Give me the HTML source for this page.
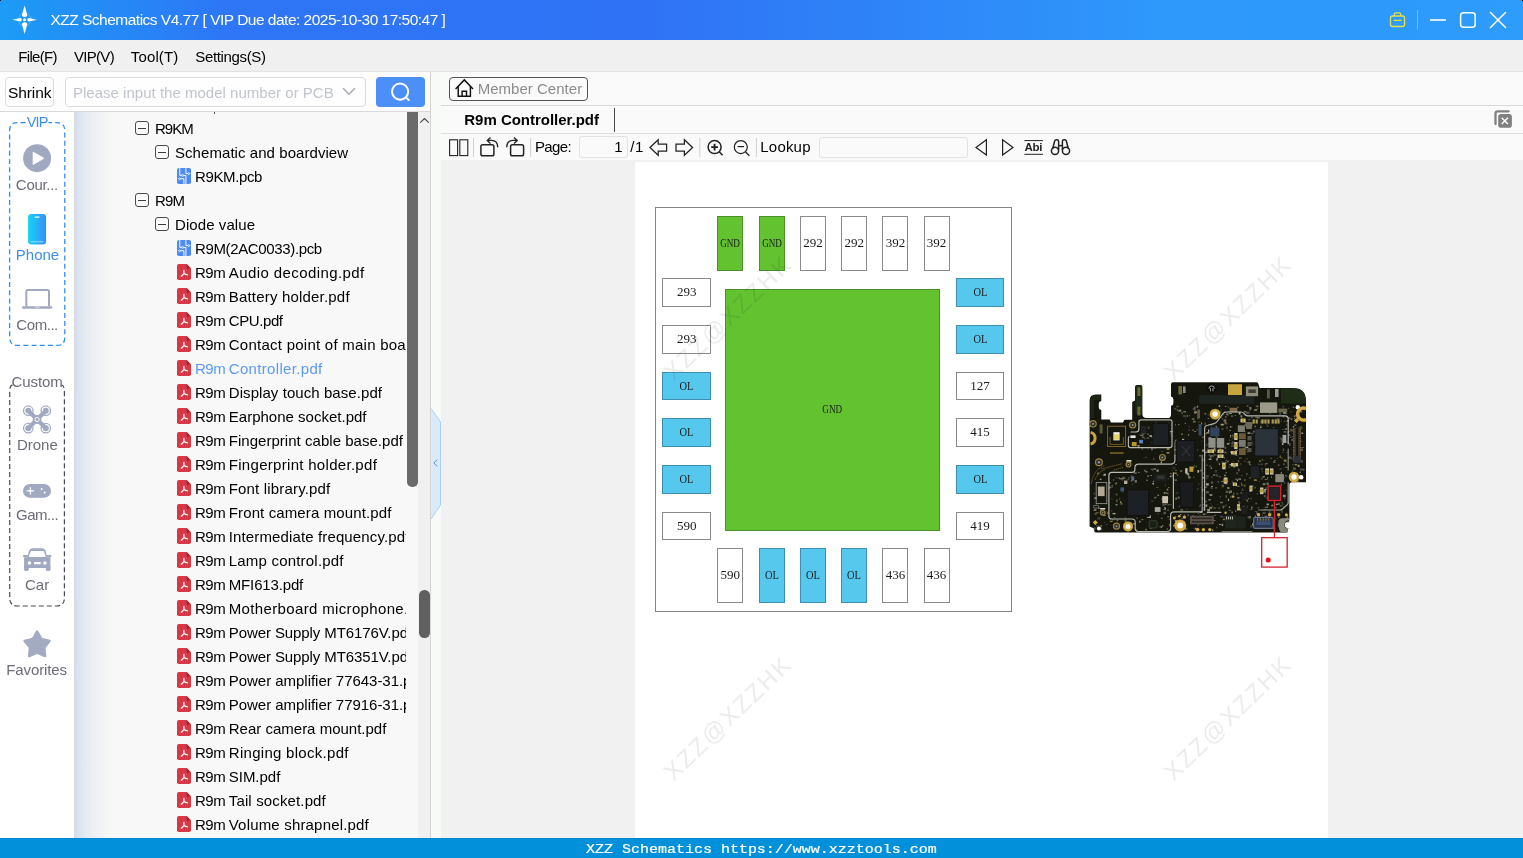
<!DOCTYPE html>
<html>
<head>
<meta charset="utf-8">
<title>XZZ Schematics</title>
<style>
*{box-sizing:border-box;margin:0;padding:0}
html,body{width:1523px;height:858px;overflow:hidden;background:#f0f0f0}
body{font-family:"Liberation Sans",sans-serif;font-size:15px;color:#000;position:relative}
.abs{position:absolute}
.t{position:absolute;white-space:pre;line-height:1}
/* title bar */
#title{left:0;top:0;width:1523px;height:40px;background:linear-gradient(90deg,#1c9cf6 0,#2e76f6 15%,#2f72f5 42%,#2e98fb 76%,#2d9cfb 100%)}
#menubar{left:0;top:40px;width:1523px;height:32px;background:#f0f0f0;border-bottom:1px solid #e2e2e2}
/* left */
#leftbg{left:0;top:72px;width:430px;height:766px;background:#fdfdfd}
#sidebar{left:0;top:112px;width:75px;height:726px;background:#fff;border-right:1px solid #d9d9d9}
#tree{left:75px;top:112px;width:331.3px;height:726px;background:linear-gradient(90deg,#d3dff2 0,#e2e8f1 8px,#ebeef3 16px,#f1f2f5 25px,#f8f8f8 36px);overflow:hidden}
#sbtrack{left:406px;top:112px;width:24px;height:726px;background:linear-gradient(90deg,#f8f8f8 12px,#f0f0f0 12px)}
#status{left:0;top:838px;width:1523px;height:20px;background:#0190d9;border-top:1px solid #0486cd}
/* right */
#rightbg{left:441px;top:72px;width:1082px;height:88px;background:#fafafa}
#content{left:441px;top:160px;width:1082px;height:678px;background:#f1f1f1}
#page{left:635px;top:162px;width:693px;height:676px;background:#fff}
.hl{position:absolute;height:1px;background:#dcdcdc}
.vl{position:absolute;width:1px;background:#dcdcdc}
.row{position:absolute;left:0;height:24px;width:332px}
.row .t{top:4.7px}
.exp{position:absolute;width:14px;height:14px;border:1px solid #4a4a4a;border-radius:3px;background:#fbfbfb}
.exp:after{content:"";position:absolute;left:2px;top:5.5px;width:8px;height:1px;background:#3a3a3a}
.pad{position:absolute;border:1px solid #8a8a8a;background:#fff}
.pad.g{background:#62c230;border-color:#4a8f2a}
.pad.b{background:#56c8ee;border-color:#3d8fb0}
.pad span{position:absolute;left:-20px;right:-20px;text-align:center;font-family:"Liberation Serif",serif;font-size:13px;line-height:1;color:#1a1a1a;white-space:pre}
.wm{position:absolute;mix-blend-mode:multiply;font-size:24px;color:#ececec;letter-spacing:2.1px;white-space:pre;line-height:1;transform:translate(-50%,-50%) rotate(-44deg)}
.sidelabel{position:absolute;left:0;width:75px;text-align:center;font-size:15px;color:#6c6c78;line-height:1;white-space:pre}
</style>
</head>
<body>
<div id="title" class="abs">
<svg class="abs" style="left:10px;top:3px" width="30" height="34" viewBox="10 3 30 34">
<circle cx="24.6" cy="19.7" r="6.4" fill="none" stroke="#fff" stroke-opacity=".28" stroke-width="0.9" stroke-dasharray="5.2 4.8" stroke-dashoffset="-2.4"/>
<path d="M24.6 5.4 L27.2 14.8 Q27.3 17 24.6 17.1 Q21.9 17 22 14.8 Z" fill="#fff"/>
<path d="M24.6 34 L27.2 24.6 Q27.3 22.4 24.6 22.3 Q21.9 22.4 22 24.6 Z" fill="#fff"/>
<path d="M12.4 19.7 L20.2 18 Q21.9 18.1 21.9 19.7 Q21.9 21.3 20.2 21.4 Z" fill="#fff"/>
<path d="M36.8 19.7 L29 18 Q27.3 18.1 27.3 19.7 Q27.3 21.3 29 21.4 Z" fill="#fff"/>
<circle cx="24.6" cy="19.7" r="1.55" fill="#fff"/>
</svg>
<span class="t" id="ttext" style="left:50.5px;top:12px;font-size:15.5px;color:#fff;letter-spacing:-0.51px">XZZ Schematics V4.77 [ VIP Due date: 2025-10-30 17:50:47 ]</span>
<svg class="abs" style="left:1385px;top:8px" width="130" height="24" viewBox="1385 8 130 24" fill="none">
<rect x="1390.5" y="16" width="14" height="10.5" rx="2" stroke="#e6e04a" stroke-width="1.3"/>
<path d="M1394.3 16 v-1.6 q0-1.5 1.5-1.5 h3.4 q1.5 0 1.5 1.5 v1.6" stroke="#e6e04a" stroke-width="1.3"/>
<path d="M1393.6 20.4 h7.8" stroke="#e6e04a" stroke-width="1.3"/>
<path d="M1417.5 10 v19.5" stroke="#7fb4f5" stroke-width="1"/>
<path d="M1430 20 h16" stroke="#fff" stroke-width="1.6"/>
<rect x="1460.6" y="12.7" width="14.6" height="14.6" rx="3" stroke="#fff" stroke-width="1.5"/>
<path d="M1490.5 12.5 l15 15 M1505.5 12.5 l-15 15" stroke="#fff" stroke-width="1.5" stroke-linecap="round"/>
</svg>
</div>
<div id="menubar" class="abs">
<span class="t" style="left:18.3px;top:9px;letter-spacing:-0.7px">File(F)</span>
<span class="t" style="left:74px;top:9px;letter-spacing:-0.7px">VIP(V)</span>
<span class="t" style="left:130.8px;top:9px;letter-spacing:0.14px">Tool(T)</span>
<span class="t" style="left:195.3px;top:9px;letter-spacing:-0.35px">Settings(S)</span>
</div>
<div id="leftbg" class="abs"></div>
<!-- search row -->
<div class="abs" style="left:5px;top:77px;width:49px;height:30px;border:1px solid #dcdcdc;border-radius:4px;background:#fdfdfd"></div>
<span class="t" style="left:8px;top:84.5px;font-size:15.5px;color:#000;letter-spacing:-0.1px">Shrink</span>
<div class="abs" style="left:65px;top:77px;width:301px;height:30px;border:1px solid #dcdcdc;border-radius:4px;background:#fefefe"></div>
<span class="t" style="left:72.9px;top:85px;font-size:15px;color:#c0c4cc;letter-spacing:0.02px">Please input the model number or PCB</span>
<svg class="abs" style="left:340px;top:84px" width="18" height="16" viewBox="0 0 18 16" fill="none"><path d="M3.4 4.6 L9 10.2 L14.6 4.6" stroke="#a4a9b1" stroke-width="1.4" stroke-linecap="round" stroke-linejoin="round"/></svg>
<div class="abs" style="left:376px;top:77px;width:49px;height:30px;border-radius:4px;background:#4c8ff9"></div>
<svg class="abs" style="left:388px;top:80px" width="26" height="26" viewBox="0 0 26 26" fill="none"><circle cx="12.1" cy="11.6" r="8.1" stroke="#fff" stroke-width="2"/><path d="M18 17.4 L20.8 20" stroke="#fff" stroke-width="2" stroke-linecap="round"/></svg>
<div class="hl" style="left:0;top:111px;width:430px;background:#dadada"></div>

<div id="sidebar" class="abs"></div>
<!-- sidebar -->
<svg class="abs" style="left:0;top:112px" width="75" height="580" viewBox="0 112 75 580" fill="none">
<!-- VIP box -->
<path d="M25.6 122.6 H17.5 Q9.6 122.6 9.6 130.6 V337.4 Q9.6 345.4 17.6 345.4 H56.8 Q64.8 345.4 64.8 337.4 V130.6 Q64.8 122.6 56.8 122.6 H48.4" stroke="#2f8df2" stroke-width="1.3" stroke-dasharray="5 3.2"/>
<!-- play -->
<circle cx="37.1" cy="158.2" r="14" fill="#a1a9c0"/>
<path d="M33.2 152.2 L43.8 158.3 L33.2 164.4 Z" fill="#fff" stroke="#fff" stroke-width="1" stroke-linejoin="round"/>
<!-- phone -->
<defs><linearGradient id="pg" x1="0" x2="1" y1="0" y2="0"><stop offset="0" stop-color="#12d4f8"/><stop offset="1" stop-color="#3b8df5"/></linearGradient></defs>
<rect x="28.1" y="214" width="18" height="30.4" rx="3.2" fill="url(#pg)"/>
<rect x="34.6" y="216.6" width="5" height="1.1" rx=".55" fill="#fff" fill-opacity=".95"/>
<rect x="30.4" y="241.3" width="13.4" height=".9" rx=".45" fill="#fff" fill-opacity=".55"/>
<!-- laptop -->
<path d="M26.3 306.4 V291.6 Q26.3 290 27.9 290 H47.4 Q49 290 49 291.6 V306.4" stroke="#a1a9c0" stroke-width="2"/>
<rect x="22" y="306.2" width="30.3" height="2.5" rx="1.1" fill="#a1a9c0"/>
<rect x="34.9" y="306.7" width="4.6" height=".8" fill="#fff" fill-opacity=".8"/>
<!-- Custom box -->
<path d="M12.5 384.8 Q9.7 385.5 9.7 392 V598 Q9.7 606 17.7 606 H56.4 Q64.4 606 64.4 598 V392 Q64.4 385.5 61.6 384.8" stroke="#4a4a52" stroke-width="1.2" stroke-dasharray="5 3"/>
<!-- drone -->
<g stroke="#a1a9c0" fill="none">
<path d="M29.5 412 L44.6 427 M44.6 412 L29.5 427" stroke-width="4.2" stroke-linecap="round"/>
<circle cx="37.05" cy="419.5" r="4.4" fill="#a1a9c0" stroke="none"/>
<circle cx="28.3" cy="410.7" r="4.75" stroke-width="1.3"/><circle cx="45.8" cy="410.7" r="4.75" stroke-width="1.3"/>
<circle cx="28.3" cy="428.2" r="4.75" stroke-width="1.3"/><circle cx="45.8" cy="428.2" r="4.75" stroke-width="1.3"/>
<circle cx="28.3" cy="410.7" r="3" fill="#a1a9c0" stroke="none"/><circle cx="45.8" cy="410.7" r="3" fill="#a1a9c0" stroke="none"/>
<circle cx="28.3" cy="428.2" r="3" fill="#a1a9c0" stroke="none"/><circle cx="45.8" cy="428.2" r="3" fill="#a1a9c0" stroke="none"/>
<circle cx="37.05" cy="419.5" r="2.1" stroke="#fff" stroke-width=".9"/>
<circle cx="37.05" cy="419.5" r=".8" fill="#a1a9c0" stroke="none"/>
</g>
<!-- gamepad -->
<rect x="23" y="484" width="28" height="13.8" rx="6.9" fill="#a1a9c0"/>
<path d="M27.1 490.8 H33.7 M30.4 487.5 V494.1" stroke="#fff" stroke-width="1.25" stroke-linecap="round"/>
<circle cx="41.6" cy="489.1" r="1" fill="#fff"/><circle cx="44.6" cy="492.5" r="1" fill="#fff"/>
<!-- car -->
<g fill="#a1a9c0">
<path d="M24.1 557.2 H27.3 L29 550.8 Q29.8 548.2 32.4 548.2 H42.2 Q44.8 548.2 45.6 550.8 L47.3 557.2 H50.4 V568 H24.1 Z"/>
<rect x="23" y="555" width="5" height="2.2" rx=".8"/><rect x="46.4" y="555" width="5" height="2.2" rx=".8"/>
<rect x="24.1" y="565" width="4.7" height="5.9" rx="1.6"/><rect x="45.8" y="565" width="4.7" height="5.9" rx="1.6"/>
</g>
<path d="M30.9 550.9 H43.7 L45.7 556.1 Q45.8 557 44.8 557 H29.8 Q28.8 557 28.9 556.1 Z" fill="#fff"/>
<circle cx="29.4" cy="563.1" r="1.75" fill="#fff"/><circle cx="44.9" cy="563.1" r="1.75" fill="#fff"/>
<rect x="34" y="562.1" width="6.7" height="2.2" rx=".5" fill="#fff"/>
<!-- star -->
<path d="M37.1 631.6 L41.3 638.9 L49.6 640.9 L44.2 647.3 L45 656 L37.1 652.6 L29.2 656 L30 647.3 L24.6 640.9 L32.9 638.9 Z" fill="#a2abc0" stroke="#a2abc0" stroke-width="2.6" stroke-linejoin="round"/>
</svg>
<span class="sidelabel" style="top:114.5px;color:#3b8ef2;font-size:14.5px;letter-spacing:-.9px;left:-0.4px">VIP</span>
<span class="sidelabel" style="top:177.3px;left:-0.6px;letter-spacing:-.3px">Cour...</span>
<span class="sidelabel" style="top:247.1px;color:#3b8ef2;left:0px">Phone</span>
<span class="sidelabel" style="top:317px;left:-0.4px;letter-spacing:-.45px">Com...</span>
<span class="sidelabel" style="top:374.3px;left:-0.4px;letter-spacing:-.1px">Custom</span>
<span class="sidelabel" style="top:437.3px;left:-0.2px">Drone</span>
<span class="sidelabel" style="top:507.2px;left:-0.4px;letter-spacing:-.45px">Gam...</span>
<span class="sidelabel" style="top:577.1px;left:-0.4px">Car</span>
<span class="sidelabel" style="top:662px;left:-0.9px;letter-spacing:-.1px">Favorites</span>
<div id="tree" class="abs">
<svg width="0" height="0" style="position:absolute"><defs>
<symbol id="pcb" viewBox="0 0 14 16"><rect x="0" y="0" width="14" height="16" rx="1.8" fill="#4c8bf5"/>
<g stroke="#fff" stroke-width=".95" fill="none"><path d="M2.75 0 V7.4 H4.7"/><path d="M8.9 0 V5.6 H10.8"/><path d="M6.5 7.4 H8.9 V16"/><path d="M3.5 10.7 H6.9 V16"/>
<circle cx="5.6" cy="7.4" r=".95" stroke-width=".8"/><circle cx="11.7" cy="5.6" r=".95" stroke-width=".8"/><circle cx="2.6" cy="10.7" r=".95" stroke-width=".8"/></g></symbol>
<symbol id="pdf" viewBox="0 0 14 16"><path d="M1.8 0 H9.6 L14 4.4 V14.2 Q14 16 12.2 16 H1.8 Q0 16 0 14.2 V1.8 Q0 0 1.8 0 Z" fill="#d63845"/><path d="M9.6 0 L14 4.4 H10.6 Q9.6 4.4 9.6 3.4 Z" fill="#a5202b"/>
<path d="M6.9 6.4 V9.6 L4.3 12.4 M6.9 9.6 L10.4 10.9" stroke="#fff" stroke-width="1.25" fill="none" stroke-linecap="round" stroke-linejoin="round"/></symbol>
</defs></svg>
<div class="abs" style="left:138.5px;top:0;width:1.6px;height:1.6px;background:#555"></div>
<div class="row" style="top:4px"><i class="exp" style="left:60.4px;top:5.3px"></i><span class="t" style="left:80.0px"><span style="letter-spacing:-0.96px">R9KM</span></span></div>
<div class="row" style="top:28px"><i class="exp" style="left:80.4px;top:5.3px"></i><span class="t" style="left:100.0px"><span style="letter-spacing:0.06px">Schematic and boardview</span></span></div>
<div class="row" style="top:52px"><svg class="abs" style="left:102px;top:4px" width="14" height="16"><use href="#pcb"/></svg><span class="t" style="left:120.0px"><span style="letter-spacing:-0.38px">R9KM.pcb</span></span></div>
<div class="row" style="top:76px"><i class="exp" style="left:60.4px;top:5.3px"></i><span class="t" style="left:80.0px"><span style="letter-spacing:-0.89px">R9M</span></span></div>
<div class="row" style="top:100px"><i class="exp" style="left:80.4px;top:5.3px"></i><span class="t" style="left:100.0px"><span style="letter-spacing:0.08px">Diode value</span></span></div>
<div class="row" style="top:124px"><svg class="abs" style="left:102px;top:4px" width="14" height="16"><use href="#pcb"/></svg><span class="t" style="left:120.0px"><span style="letter-spacing:-0.36px">R9M(2AC0033).pcb</span></span></div>
<div class="row" style="top:148px"><svg class="abs" style="left:102px;top:4px" width="14" height="16"><use href="#pdf"/></svg><span class="t" style="left:120.0px"><span style="letter-spacing:-0.52px">R9m </span><span style="letter-spacing:0.41px">Audio decoding.pdf</span></span></div>
<div class="row" style="top:172px"><svg class="abs" style="left:102px;top:4px" width="14" height="16"><use href="#pdf"/></svg><span class="t" style="left:120.0px"><span style="letter-spacing:-0.52px">R9m </span><span style="letter-spacing:0.19px">Battery holder.pdf</span></span></div>
<div class="row" style="top:196px"><svg class="abs" style="left:102px;top:4px" width="14" height="16"><use href="#pdf"/></svg><span class="t" style="left:120.0px"><span style="letter-spacing:-0.52px">R9m </span><span style="letter-spacing:-0.41px">CPU.pdf</span></span></div>
<div class="row" style="top:220px"><svg class="abs" style="left:102px;top:4px" width="14" height="16"><use href="#pdf"/></svg><span class="t" style="left:120.0px"><span style="letter-spacing:-0.52px">R9m </span><span style="letter-spacing:0.25px">Contact point of main board.pdf</span></span></div>
<div class="row" style="top:244px"><svg class="abs" style="left:102px;top:4px" width="14" height="16"><use href="#pdf"/></svg><span class="t" style="left:120.0px;color:#5b9af3"><span style="letter-spacing:-0.52px">R9m </span><span style="letter-spacing:0.33px">Controller.pdf</span></span></div>
<div class="row" style="top:268px"><svg class="abs" style="left:102px;top:4px" width="14" height="16"><use href="#pdf"/></svg><span class="t" style="left:120.0px"><span style="letter-spacing:-0.52px">R9m </span><span style="letter-spacing:0.07px">Display touch base.pdf</span></span></div>
<div class="row" style="top:292px"><svg class="abs" style="left:102px;top:4px" width="14" height="16"><use href="#pdf"/></svg><span class="t" style="left:120.0px"><span style="letter-spacing:-0.52px">R9m </span><span style="letter-spacing:0.01px">Earphone socket.pdf</span></span></div>
<div class="row" style="top:316px"><svg class="abs" style="left:102px;top:4px" width="14" height="16"><use href="#pdf"/></svg><span class="t" style="left:120.0px"><span style="letter-spacing:-0.52px">R9m </span><span style="letter-spacing:0.03px">Fingerprint cable base.pdf</span></span></div>
<div class="row" style="top:340px"><svg class="abs" style="left:102px;top:4px" width="14" height="16"><use href="#pdf"/></svg><span class="t" style="left:120.0px"><span style="letter-spacing:-0.52px">R9m </span><span style="letter-spacing:0.30px">Fingerprint holder.pdf</span></span></div>
<div class="row" style="top:364px"><svg class="abs" style="left:102px;top:4px" width="14" height="16"><use href="#pdf"/></svg><span class="t" style="left:120.0px"><span style="letter-spacing:-0.52px">R9m </span><span style="letter-spacing:0.17px">Font library.pdf</span></span></div>
<div class="row" style="top:388px"><svg class="abs" style="left:102px;top:4px" width="14" height="16"><use href="#pdf"/></svg><span class="t" style="left:120.0px"><span style="letter-spacing:-0.52px">R9m </span><span style="letter-spacing:0.12px">Front camera mount.pdf</span></span></div>
<div class="row" style="top:412px"><svg class="abs" style="left:102px;top:4px" width="14" height="16"><use href="#pdf"/></svg><span class="t" style="left:120.0px"><span style="letter-spacing:-0.52px">R9m </span><span style="letter-spacing:0.13px">Intermediate frequency.pdf</span></span></div>
<div class="row" style="top:436px"><svg class="abs" style="left:102px;top:4px" width="14" height="16"><use href="#pdf"/></svg><span class="t" style="left:120.0px"><span style="letter-spacing:-0.52px">R9m </span><span style="letter-spacing:0.20px">Lamp control.pdf</span></span></div>
<div class="row" style="top:460px"><svg class="abs" style="left:102px;top:4px" width="14" height="16"><use href="#pdf"/></svg><span class="t" style="left:120.0px"><span style="letter-spacing:-0.52px">R9m </span><span style="letter-spacing:-0.15px">MFI613.pdf</span></span></div>
<div class="row" style="top:484px"><svg class="abs" style="left:102px;top:4px" width="14" height="16"><use href="#pdf"/></svg><span class="t" style="left:120.0px"><span style="letter-spacing:-0.52px">R9m </span><span style="letter-spacing:0.35px">Motherboard microphone.pdf</span></span></div>
<div class="row" style="top:508px"><svg class="abs" style="left:102px;top:4px" width="14" height="16"><use href="#pdf"/></svg><span class="t" style="left:120.0px"><span style="letter-spacing:-0.52px">R9m </span><span style="letter-spacing:-0.09px">Power Supply MT6176V.pdf</span></span></div>
<div class="row" style="top:532px"><svg class="abs" style="left:102px;top:4px" width="14" height="16"><use href="#pdf"/></svg><span class="t" style="left:120.0px"><span style="letter-spacing:-0.52px">R9m </span><span style="letter-spacing:-0.09px">Power Supply MT6351V.pdf</span></span></div>
<div class="row" style="top:556px"><svg class="abs" style="left:102px;top:4px" width="14" height="16"><use href="#pdf"/></svg><span class="t" style="left:120.0px"><span style="letter-spacing:-0.52px">R9m </span><span style="letter-spacing:-0.03px">Power amplifier 77643-31.pdf</span></span></div>
<div class="row" style="top:580px"><svg class="abs" style="left:102px;top:4px" width="14" height="16"><use href="#pdf"/></svg><span class="t" style="left:120.0px"><span style="letter-spacing:-0.52px">R9m </span><span style="letter-spacing:-0.03px">Power amplifier 77916-31.pdf</span></span></div>
<div class="row" style="top:604px"><svg class="abs" style="left:102px;top:4px" width="14" height="16"><use href="#pdf"/></svg><span class="t" style="left:120.0px"><span style="letter-spacing:-0.52px">R9m </span><span style="letter-spacing:0.00px">Rear camera mount.pdf</span></span></div>
<div class="row" style="top:628px"><svg class="abs" style="left:102px;top:4px" width="14" height="16"><use href="#pdf"/></svg><span class="t" style="left:120.0px"><span style="letter-spacing:-0.52px">R9m </span><span style="letter-spacing:0.29px">Ringing block.pdf</span></span></div>
<div class="row" style="top:652px"><svg class="abs" style="left:102px;top:4px" width="14" height="16"><use href="#pdf"/></svg><span class="t" style="left:120.0px"><span style="letter-spacing:-0.52px">R9m </span><span style="letter-spacing:-0.02px">SIM.pdf</span></span></div>
<div class="row" style="top:676px"><svg class="abs" style="left:102px;top:4px" width="14" height="16"><use href="#pdf"/></svg><span class="t" style="left:120.0px"><span style="letter-spacing:-0.52px">R9m </span><span style="letter-spacing:0.14px">Tail socket.pdf</span></span></div>
<div class="row" style="top:700px"><svg class="abs" style="left:102px;top:4px" width="14" height="16"><use href="#pdf"/></svg><span class="t" style="left:120.0px"><span style="letter-spacing:-0.52px">R9m </span><span style="letter-spacing:0.18px">Volume shrapnel.pdf</span></span></div>
</div>
<div id="sbtrack" class="abs"></div>
<div class="abs" style="left:407px;top:112px;width:10.5px;height:375px;background:#6a6a6a;border-radius:0 0 5px 5px"></div>
<div class="abs" style="left:419.4px;top:590px;width:10.4px;height:48px;background:#606060;border-radius:5.2px"></div>
<svg class="abs" style="left:418px;top:115px" width="12" height="10" viewBox="0 0 12 10" fill="none"><path d="M2.2 7.7 L6.5 3.5 L10.8 7.7" stroke="#444" stroke-width="1.1"/></svg>
<!-- divider -->
<div class="abs" style="left:430px;top:72px;width:11px;height:766px;background:#f7faf6"></div>
<div class="vl" style="left:430px;top:72px;height:766px;background:#d4d4d4"></div>
<div class="vl" style="left:440.5px;top:72px;height:766px;background:#d9d9d9"></div>
<svg class="abs" style="left:430px;top:405px" width="12" height="118" viewBox="430 405 12 118" fill="none">
<path d="M431 408.5 L440.5 422 V505 L431 519 Z" fill="#d9eafb"/>
<path d="M431 408.5 L440.5 422 V505 L431 519" stroke="#a9d1f8" stroke-width="1"/>
<path d="M437.2 459.6 L433.8 463 L437.2 466.4" stroke="#4d94ee" stroke-width="1"/>
</svg>
<div id="rightbg" class="abs"></div>
<div class="hl" style="left:441px;top:105px;width:1082px;background:#dadada"></div>
<div class="hl" style="left:441px;top:133px;width:1082px;background:#dedede"></div>
<div id="content" class="abs"></div>
<!-- member center -->
<div class="abs" style="left:449px;top:76.8px;width:139.4px;height:24px;border:1px solid #555;border-radius:4px;background:#fafafa"></div>
<svg class="abs" style="left:453px;top:77px" width="23" height="23" viewBox="453 77 23 23" fill="none" stroke="#111" stroke-width="1.45" stroke-linejoin="miter">
<path d="M455.6 88.9 L464.3 79.9 L473 88.9"/>
<path d="M458.2 86.6 V96.2 H470.4 V86.6"/>
<path d="M462.1 96.2 V91.3 H466.5 V96.2"/>
</svg>
<span class="t" style="left:477.7px;top:81.3px;font-size:15px;color:#8c8c8c;letter-spacing:0.02px">Member Center</span>
<!-- tab -->
<span class="t" id="tabtext" style="left:464.3px;top:111.9px;font-size:15px;font-weight:700;color:#000;letter-spacing:-0.02px">R9m Controller.pdf</span>
<div class="abs" style="left:614px;top:108px;width:1.4px;height:24px;background:#4a4a4a"></div>
<svg class="abs" style="left:1492px;top:108px" width="22" height="22" viewBox="1492 108 22 22" fill="none">
<path d="M1508.7 111.3 H1497.8 Q1495.5 111.3 1495.5 113.6 V124" stroke="#808080" stroke-width="2.3" stroke-linecap="round"/>
<rect x="1498.2" y="114" width="13.7" height="13.7" rx="2.8" fill="#808080"/>
<path d="M1501.7 117.8 L1507.9 124 M1507.9 117.8 L1501.7 124" stroke="#fff" stroke-width="1.35"/>
</svg>
<!-- toolbar -->
<svg class="abs" style="left:441px;top:134px" width="640" height="26" viewBox="441 134 640 26" fill="none" stroke="#222" stroke-width="1.2">
<!-- two page -->
<rect x="449.6" y="139.8" width="8" height="15.8" stroke-width="1.1"/><rect x="459.8" y="139.8" width="8" height="15.8" stroke-width="1.1"/>
<path d="M473.5 138 V157" stroke="#d0d0d0" stroke-width="1"/>
<!-- rotate left -->
<rect x="480.9" y="144.8" width="13" height="11" rx="1.8" stroke-width="1.5"/>
<path d="M487.5 140.4 H491.5 Q497.7 140.4 497.7 147.2" stroke-width="1.4"/>
<path d="M490.5 137.4 L487.3 140.4 L490.5 143.4" stroke-width="1.4"/>
<!-- rotate right -->
<rect x="510.6" y="144.8" width="13" height="11" rx="1.8" stroke-width="1.5"/>
<path d="M517 140.4 H513 Q506.8 140.4 506.8 147.2" stroke-width="1.4"/>
<path d="M514 137.4 L517.2 140.4 L514 143.4" stroke-width="1.4"/>
<path d="M530.6 138 V157" stroke="#d0d0d0" stroke-width="1"/>
<!-- arrows -->
<path d="M650 147.5 L658.2 139.8 V144 H666.6 V151 H658.2 V155.2 Z" stroke-width="1.25" stroke-linejoin="miter"/>
<path d="M692.6 147.5 L684.4 139.8 V144 H676 V151 H684.4 V155.2 Z" stroke-width="1.25" stroke-linejoin="miter"/>
<path d="M699.8 138 V157" stroke="#d0d0d0" stroke-width="1"/>
<!-- zoom in -->
<circle cx="714.6" cy="147.1" r="6.5" stroke-width="1.5"/><path d="M719.4 152 L722.6 155.3" stroke-width="1.6"/>
<path d="M711.2 147.1 H718 M714.6 143.7 V150.5" stroke-width="1.9"/>
<!-- zoom out -->
<circle cx="740.8" cy="147.1" r="6.5" stroke-width="1.2"/><path d="M745.6 152 L749.4 155.8" stroke-width="1.3"/>
<path d="M737.6 146.6 H744" stroke-width="1.2"/>
<path d="M756.4 138 V157" stroke="#d0d0d0" stroke-width="1"/>
<!-- prev/next -->
<path d="M986.4 139.8 V155 L976 147.4 Z" stroke-width="1.2"/>
<path d="M1002.6 139.8 V155 L1013 147.4 Z" stroke-width="1.2"/>
<!-- Abi lines -->
<path d="M1024.4 140.6 H1043" stroke-width="1"/><path d="M1024.4 154.3 H1043" stroke-width="1"/>
<!-- binoculars -->
<g stroke-width="1.5">
<path d="M1052.6 149 L1054.6 141.2 Q1055 139.8 1056.4 139.8 H1057 Q1058.6 139.8 1058.6 141.4 V150"/>
<path d="M1068.4 149 L1066.4 141.2 Q1066 139.8 1064.6 139.8 H1064 Q1062.4 139.8 1062.4 141.4 V150"/>
<circle cx="1055" cy="150.8" r="3.6"/><circle cx="1066" cy="150.8" r="3.6"/>
<path d="M1058.6 145.6 H1062.4"/>
</g>
</svg>
<span class="t" style="left:535px;top:138.8px;font-size:15px;color:#000;letter-spacing:-0.65px">Page:</span>
<div class="abs" style="left:578.5px;top:136px;width:49.3px;height:21.8px;border:1px solid #e2e2e2;border-radius:3px;background:#fafafa"></div>
<span class="t" style="left:614.3px;top:138.8px;font-size:15px;color:#000">1</span>
<span class="t" style="left:630.3px;top:138.8px;font-size:15px;color:#000;letter-spacing:0.6px">/1</span>
<span class="t" style="left:760.3px;top:138.8px;font-size:15px;color:#000;letter-spacing:0.2px">Lookup</span>
<div class="abs" style="left:818.6px;top:136.6px;width:149px;height:21px;border:1px solid #e2e2e2;border-radius:3px;background:#fafafa"></div>
<span class="t" style="left:1024.6px;top:142.4px;font-size:11.5px;font-weight:700;color:#222;letter-spacing:-0.35px">Abi</span>
<div id="page" class="abs"></div>
<div class="abs" style="left:654.7px;top:206.7px;width:357.3px;height:405.2px;border:1px solid #858585;background:#fff"></div>
<div class="pad g" style="left:717.3px;top:215.9px;width:26.0px;height:55.3px"><span style="top:19.2px;font-size:13px;transform:scaleX(0.7)">GND</span></div>
<div class="pad g" style="left:758.7px;top:215.9px;width:26.0px;height:55.3px"><span style="top:19.2px;font-size:13px;transform:scaleX(0.7)">GND</span></div>
<div class="pad" style="left:799.9px;top:215.9px;width:26.0px;height:55.3px"><span style="top:19.2px;font-size:13px">292</span></div>
<div class="pad" style="left:841.2px;top:215.9px;width:26.0px;height:55.3px"><span style="top:19.2px;font-size:13px">292</span></div>
<div class="pad" style="left:882.4px;top:215.9px;width:26.0px;height:55.3px"><span style="top:19.2px;font-size:13px">392</span></div>
<div class="pad" style="left:923.5px;top:215.9px;width:26.0px;height:55.3px"><span style="top:19.2px;font-size:13px">392</span></div>
<div class="pad" style="left:717.3px;top:547.9px;width:26.0px;height:55.3px"><span style="top:19.2px;font-size:13px">590</span></div>
<div class="pad b" style="left:758.7px;top:547.9px;width:26.0px;height:55.3px"><span style="top:19.2px;font-size:13px;transform:scaleX(0.8)">OL</span></div>
<div class="pad b" style="left:799.9px;top:547.9px;width:26.0px;height:55.3px"><span style="top:19.2px;font-size:13px;transform:scaleX(0.8)">OL</span></div>
<div class="pad b" style="left:841.2px;top:547.9px;width:26.0px;height:55.3px"><span style="top:19.2px;font-size:13px;transform:scaleX(0.8)">OL</span></div>
<div class="pad" style="left:882.4px;top:547.9px;width:26.0px;height:55.3px"><span style="top:19.2px;font-size:13px">436</span></div>
<div class="pad" style="left:923.5px;top:547.9px;width:26.0px;height:55.3px"><span style="top:19.2px;font-size:13px">436</span></div>
<div class="pad" style="left:662.2px;top:278.1px;width:48.9px;height:28.9px"><span style="top:6.0px;font-size:13px">293</span></div>
<div class="pad" style="left:662.2px;top:324.8px;width:48.9px;height:28.9px"><span style="top:6.0px;font-size:13px">293</span></div>
<div class="pad b" style="left:662.2px;top:371.5px;width:48.9px;height:28.9px"><span style="top:6.0px;font-size:13px;transform:scaleX(0.8)">OL</span></div>
<div class="pad b" style="left:662.2px;top:418.2px;width:48.9px;height:28.9px"><span style="top:6.0px;font-size:13px;transform:scaleX(0.8)">OL</span></div>
<div class="pad b" style="left:662.2px;top:464.9px;width:48.9px;height:28.9px"><span style="top:6.0px;font-size:13px;transform:scaleX(0.8)">OL</span></div>
<div class="pad" style="left:662.2px;top:511.6px;width:48.9px;height:28.9px"><span style="top:6.0px;font-size:13px">590</span></div>
<div class="pad b" style="left:955.6px;top:278.1px;width:48.9px;height:28.9px"><span style="top:6.0px;font-size:13px;transform:scaleX(0.8)">OL</span></div>
<div class="pad b" style="left:955.6px;top:324.8px;width:48.9px;height:28.9px"><span style="top:6.0px;font-size:13px;transform:scaleX(0.8)">OL</span></div>
<div class="pad" style="left:955.6px;top:371.5px;width:48.9px;height:28.9px"><span style="top:6.0px;font-size:13px">127</span></div>
<div class="pad" style="left:955.6px;top:418.2px;width:48.9px;height:28.9px"><span style="top:6.0px;font-size:13px">415</span></div>
<div class="pad b" style="left:955.6px;top:464.9px;width:48.9px;height:28.9px"><span style="top:6.0px;font-size:13px;transform:scaleX(0.8)">OL</span></div>
<div class="pad" style="left:955.6px;top:511.6px;width:48.9px;height:28.9px"><span style="top:6.0px;font-size:13px">419</span></div>
<div class="pad g" style="left:725.2px;top:288.8px;width:214.4px;height:241.8px"><span style="top:112.6px;font-size:13px;transform:scaleX(0.7)">GND</span></div>
<span class="wm" style="left:727.5px;top:318px">XZZ@XZZHK</span>
<span class="wm" style="left:727.5px;top:718px">XZZ@XZZHK</span>
<span class="wm" style="left:1227.5px;top:318px">XZZ@XZZHK</span>
<span class="wm" style="left:1227.5px;top:718px">XZZ@XZZHK</span>
<svg class="abs" style="left:1080px;top:370px" width="240" height="205" viewBox="1080 370 240 205" fill="none">
<path d="M1089.6 401 Q1089.6 394.6 1096 394.6 H1101.3 V401 Q1098.8 401.4 1098.8 403.6 V407.4 Q1098.8 409.4 1101.3 410 V419.6 H1109.6 L1111 422.4 H1123 L1124.4 419.8 H1132.2 V402 L1135 400.6 V387 Q1135 385 1137 385 H1140.4 Q1142.4 385 1142.4 387 V414 Q1142.4 418 1146.4 418 H1167.4 Q1171 418 1171 414.4 V405.8 Q1173.4 405.4 1173.4 403.2 V399.4 Q1173.4 397 1171 396.6 V384.2 Q1171 382.2 1173 382.2 H1256.4 Q1258.2 382.2 1258.6 384.2 L1259.6 388 H1293 Q1306 388 1306 401 V482.2 H1292 Q1289.4 482.2 1289.4 484.8 V518.6 Q1289.6 521.6 1287.6 522 A3 3 0 0 0 1287.8 528 V530.4 Q1287.8 532.6 1285.6 532.6 H1096.4 Q1094.2 532.6 1094.2 530.4 V528.4 L1089.6 526.4 Z" fill="#15170f"/>
<path d="M1281 388.4 H1293 Q1305.6 388.4 1305.6 401 V403.4 H1281 Z" fill="#1f2d17"/>
<rect x="1199.3" y="395.2" width="55" height="8.6" fill="#1e2521"/>
<path d="M1090.6 401 Q1090.6 395 1096.6 395 H1100.9 V400 H1094 V418 H1090.6 Z" fill="#1c2416"/>
<path d="M1135.4 387 Q1135.4 385.4 1137 385.4 H1140.4 Q1142 385.4 1142 387 V414 H1135.4 Z" fill="#1d2a17"/>
<path d="M1206.0 475.4h2.8v1.2h-2.8zM1238.3 478.3h2.8v1.8h-2.8zM1277.8 523.7h1.3v0.9h-1.3zM1205.2 522.6h2.8v0.9h-2.8zM1215.6 436.4h2.2v1.2h-2.2zM1108.3 487.7h1.3v1.5h-1.3zM1293.8 418.1h1.3v0.9h-1.3zM1251.0 506.5h1.6v1.8h-1.6zM1293.5 451.1h2.2v2.4h-2.2zM1229.2 490.6h2.8v2.4h-2.8zM1207.8 443.0h1.0v1.8h-1.0zM1295.3 460.2h1.6v1.8h-1.6zM1290.6 430.3h2.8v0.9h-2.8zM1262.7 482.9h2.8v2.4h-2.8zM1301.3 460.2h1.3v2.4h-1.3zM1270.4 513.1h1.0v1.2h-1.0zM1203.4 458.7h1.0v0.9h-1.0zM1264.7 506.8h2.2v0.9h-2.2zM1285.2 428.1h1.6v1.8h-1.6zM1178.9 505.5h1.0v1.8h-1.0zM1263.3 420.6h2.2v1.2h-2.2zM1274.0 460.1h1.6v0.9h-1.6zM1212.7 519.9h2.8v1.2h-2.8zM1261.2 524.9h1.3v1.5h-1.3zM1188.8 426.4h1.0v0.9h-1.0zM1183.0 415.5h2.8v0.9h-2.8zM1298.2 465.5h1.3v1.2h-1.3zM1232.1 437.7h1.6v0.9h-1.6zM1204.1 454.7h1.3v1.2h-1.3zM1255.8 405.5h2.8v1.2h-2.8zM1134.7 480.0h2.2v2.4h-2.2zM1287.1 515.8h1.0v2.4h-1.0zM1147.4 433.5h1.3v1.5h-1.3zM1211.1 425.4h1.0v0.9h-1.0zM1223.0 424.2h1.3v0.9h-1.3zM1134.7 523.3h1.0v1.8h-1.0zM1153.0 458.5h1.6v0.9h-1.6zM1238.7 502.4h1.6v1.5h-1.6zM1176.7 523.2h2.2v1.8h-2.2zM1156.1 463.9h1.0v1.5h-1.0zM1230.1 435.3h1.0v2.4h-1.0zM1220.1 501.7h2.8v1.5h-2.8zM1220.9 481.1h2.8v0.9h-2.8zM1273.3 427.1h1.0v1.5h-1.0zM1262.4 475.9h2.2v1.8h-2.2zM1245.5 424.7h2.2v2.4h-2.2zM1216.2 427.6h1.3v0.9h-1.3zM1241.3 484.8h2.2v0.9h-2.2zM1184.7 422.7h1.3v1.2h-1.3zM1283.6 431.3h2.8v1.2h-2.8zM1245.7 499.2h1.3v1.2h-1.3zM1163.1 509.2h2.2v0.9h-2.2zM1283.2 463.6h1.6v1.2h-1.6zM1201.6 459.7h2.8v0.9h-2.8zM1292.7 406.4h1.3v1.5h-1.3zM1114.5 512.7h1.0v1.5h-1.0zM1261.5 408.5h1.0v1.5h-1.0zM1204.6 422.6h1.0v2.4h-1.0zM1166.7 488.4h1.6v2.4h-1.6zM1162.0 525.1h1.3v1.5h-1.3zM1301.2 446.9h2.8v0.9h-2.8zM1159.5 526.3h2.8v1.2h-2.8zM1166.8 528.2h1.0v1.8h-1.0zM1213.1 455.4h1.0v1.2h-1.0zM1251.7 417.3h1.0v0.9h-1.0zM1279.1 476.8h1.0v1.8h-1.0zM1157.6 513.4h1.3v0.9h-1.3zM1296.1 440.3h2.8v1.5h-2.8zM1246.8 499.6h1.0v2.4h-1.0zM1238.2 501.0h1.3v1.5h-1.3zM1167.4 509.5h1.3v1.5h-1.3zM1175.3 497.4h1.6v2.4h-1.6zM1266.5 482.5h2.2v2.4h-2.2zM1132.6 523.0h2.8v1.5h-2.8zM1152.8 480.7h1.6v1.2h-1.6zM1266.6 496.8h1.6v1.8h-1.6zM1170.0 472.9h1.6v1.2h-1.6zM1093.6 509.1h2.8v1.8h-2.8zM1180.0 470.2h2.2v1.5h-2.2zM1207.6 418.0h1.6v0.9h-1.6zM1222.3 454.5h1.0v1.5h-1.0zM1282.9 415.0h1.3v2.4h-1.3zM1200.3 469.6h1.6v1.8h-1.6zM1116.6 519.7h1.6v1.5h-1.6zM1145.3 528.7h1.6v1.8h-1.6zM1197.9 513.1h1.0v0.9h-1.0zM1244.9 422.0h2.2v1.5h-2.2zM1279.9 505.2h1.6v1.2h-1.6zM1263.6 475.9h1.3v0.9h-1.3zM1205.2 513.4h1.6v0.9h-1.6zM1299.4 411.0h2.8v1.5h-2.8zM1223.5 419.3h2.8v2.4h-2.8zM1164.9 504.1h1.6v0.9h-1.6zM1246.3 412.2h2.2v1.5h-2.2zM1210.9 455.2h2.2v1.2h-2.2zM1300.9 441.2h1.0v0.9h-1.0zM1199.3 455.0h1.6v1.5h-1.6zM1266.9 506.2h1.0v1.8h-1.0zM1225.6 495.3h1.3v2.4h-1.3zM1193.9 410.8h2.2v2.4h-2.2zM1178.1 410.3h1.6v1.5h-1.6zM1231.8 495.2h1.0v2.4h-1.0zM1296.4 480.3h2.2v1.8h-2.2zM1229.9 490.8h1.3v1.8h-1.3zM1153.8 447.5h2.2v0.9h-2.2zM1151.5 441.9h1.0v1.2h-1.0zM1254.5 425.8h1.6v1.5h-1.6zM1296.0 476.8h2.2v1.8h-2.2zM1249.7 408.4h1.6v1.8h-1.6zM1123.2 477.4h1.0v1.8h-1.0zM1296.7 449.0h1.6v1.5h-1.6zM1113.1 479.3h1.0v1.5h-1.0zM1100.0 525.2h2.2v1.5h-2.2zM1239.2 413.0h1.6v1.2h-1.6zM1224.5 421.3h1.6v2.4h-1.6zM1181.6 411.9h1.0v2.4h-1.0zM1192.9 420.7h2.8v1.8h-2.8zM1255.5 502.8h1.3v1.5h-1.3zM1244.0 493.9h1.0v1.5h-1.0zM1244.7 424.1h2.2v1.2h-2.2zM1257.7 507.0h1.0v1.2h-1.0zM1251.2 417.0h1.0v1.2h-1.0zM1098.0 507.7h2.2v1.2h-2.2zM1234.6 415.0h1.3v0.9h-1.3zM1255.0 515.2h1.0v2.4h-1.0zM1100.4 510.4h1.6v1.5h-1.6zM1273.0 461.6h1.6v1.2h-1.6zM1231.3 443.0h1.6v1.2h-1.6zM1279.6 436.9h1.0v0.9h-1.0zM1285.9 517.7h2.2v1.8h-2.2zM1194.1 431.0h2.2v0.9h-2.2zM1183.3 411.0h2.8v1.5h-2.8zM1224.9 416.2h1.6v1.5h-1.6zM1254.5 487.1h1.3v1.5h-1.3zM1249.5 476.9h1.0v1.8h-1.0zM1135.2 528.9h1.3v1.5h-1.3zM1231.3 511.5h1.6v1.8h-1.6zM1264.7 479.1h2.8v0.9h-2.8zM1281.2 502.2h1.3v0.9h-1.3zM1265.4 463.0h2.2v1.2h-2.2zM1243.7 411.0h2.8v1.5h-2.8zM1124.6 520.5h2.2v0.9h-2.2zM1108.7 486.4h2.2v1.8h-2.2zM1286.9 520.7h2.8v0.9h-2.8zM1245.4 510.1h1.3v1.8h-1.3zM1168.9 523.8h1.0v2.4h-1.0zM1219.2 411.2h1.6v1.8h-1.6zM1208.2 498.9h2.8v1.5h-2.8zM1209.9 455.9h1.6v1.8h-1.6zM1141.7 448.0h1.0v1.8h-1.0zM1097.1 472.6h1.6v1.8h-1.6zM1237.2 406.7h1.3v1.2h-1.3zM1261.4 422.4h1.3v1.2h-1.3zM1241.0 482.8h1.0v1.8h-1.0zM1130.8 480.2h1.3v1.5h-1.3zM1194.0 407.1h1.3v1.2h-1.3zM1272.4 527.6h2.2v0.9h-2.2zM1282.6 477.3h2.2v0.9h-2.2zM1225.5 471.9h1.3v1.5h-1.3zM1130.8 475.6h1.3v0.9h-1.3zM1198.1 519.5h1.3v1.2h-1.3zM1187.9 434.0h1.3v1.8h-1.3zM1269.5 412.6h1.0v0.9h-1.0zM1224.3 451.8h2.2v1.5h-2.2zM1233.0 466.0h2.2v1.5h-2.2z" fill="#8d8a74" fill-opacity=".75"/>
<path d="M1229.0 413.1h2.8v0.9h-2.8zM1186.9 472.7h2.2v2.4h-2.2zM1141.5 433.2h2.8v1.2h-2.8zM1247.6 432.3h2.8v1.8h-2.8zM1244.1 447.7h1.6v0.9h-1.6zM1275.2 507.3h1.3v0.9h-1.3zM1256.9 417.3h2.8v0.9h-2.8zM1285.1 475.3h1.6v0.9h-1.6zM1298.8 444.4h1.0v1.5h-1.0zM1230.1 435.0h1.0v0.9h-1.0zM1248.9 463.2h1.0v1.5h-1.0zM1286.7 419.9h2.2v1.8h-2.2zM1174.8 519.9h2.2v1.8h-2.2zM1202.6 476.9h2.2v1.5h-2.2zM1218.6 405.3h1.6v1.8h-1.6zM1249.2 516.3h1.6v1.5h-1.6zM1287.6 441.9h1.3v2.4h-1.3zM1205.6 500.7h1.0v1.5h-1.0zM1218.5 507.5h1.3v0.9h-1.3zM1217.6 481.5h1.3v0.9h-1.3zM1149.7 527.5h2.2v0.9h-2.2zM1280.4 438.4h2.2v1.2h-2.2zM1145.7 471.0h1.6v1.5h-1.6zM1221.6 523.7h1.6v2.4h-1.6zM1139.3 440.4h2.2v2.4h-2.2zM1156.5 469.4h2.2v2.4h-2.2zM1103.1 515.2h2.8v0.9h-2.8zM1230.0 425.9h1.0v1.5h-1.0zM1249.7 490.9h1.6v0.9h-1.6zM1208.7 458.5h2.8v1.5h-2.8zM1120.7 503.0h1.6v1.5h-1.6zM1293.1 468.4h2.8v1.2h-2.8zM1119.5 478.3h2.8v0.9h-2.8zM1244.1 479.4h1.6v1.2h-1.6zM1266.9 517.5h1.0v0.9h-1.0zM1236.0 453.1h1.0v2.4h-1.0zM1234.9 464.2h1.6v1.5h-1.6zM1196.1 411.3h1.3v1.8h-1.3zM1283.7 439.5h1.6v1.8h-1.6zM1150.6 475.1h1.3v0.9h-1.3zM1249.2 490.9h1.3v0.9h-1.3zM1229.0 506.2h1.0v1.8h-1.0zM1262.7 512.4h2.8v1.2h-2.8zM1201.1 422.6h1.0v1.8h-1.0zM1182.0 522.3h2.8v1.2h-2.8zM1240.6 415.2h1.6v2.4h-1.6zM1216.3 459.2h1.0v1.8h-1.0zM1164.0 506.9h1.6v1.2h-1.6zM1233.0 482.6h1.3v2.4h-1.3zM1175.7 521.7h1.6v1.8h-1.6zM1207.2 509.0h2.8v2.4h-2.8zM1219.9 451.4h2.2v1.8h-2.2zM1094.4 497.2h2.2v1.8h-2.2zM1205.2 504.4h2.2v2.4h-2.2zM1242.5 448.2h1.3v0.9h-1.3zM1215.7 425.7h1.0v1.8h-1.0zM1218.9 524.0h2.2v0.9h-2.2zM1169.9 431.1h2.8v1.2h-2.8zM1251.2 423.5h1.0v2.4h-1.0zM1142.3 436.5h1.3v1.5h-1.3zM1297.8 464.7h1.6v2.4h-1.6zM1249.2 407.2h2.2v1.2h-2.2zM1292.8 426.0h1.3v1.8h-1.3zM1246.8 405.5h1.6v0.9h-1.6zM1280.6 472.3h1.3v1.5h-1.3zM1271.3 525.5h1.3v0.9h-1.3zM1188.2 476.2h2.2v2.4h-2.2zM1206.5 431.9h2.8v1.5h-2.8zM1212.3 528.9h1.0v2.4h-1.0zM1167.5 504.4h2.2v0.9h-2.2zM1271.0 476.5h1.0v1.2h-1.0zM1196.9 405.8h1.3v1.8h-1.3zM1275.8 503.7h2.8v1.2h-2.8zM1213.8 448.1h1.6v1.2h-1.6zM1231.5 415.3h1.0v1.8h-1.0zM1282.9 494.8h2.8v2.4h-2.8zM1290.7 418.5h1.6v1.2h-1.6zM1108.9 482.0h1.6v1.5h-1.6zM1201.8 489.2h1.0v2.4h-1.0zM1173.0 524.9h1.3v1.5h-1.3zM1178.3 424.0h1.0v1.2h-1.0zM1205.0 486.7h2.2v0.9h-2.2zM1168.8 518.7h1.6v0.9h-1.6zM1254.2 409.2h2.8v1.5h-2.8zM1235.0 510.6h1.3v1.2h-1.3zM1224.2 474.7h1.6v1.5h-1.6zM1167.2 516.4h2.2v0.9h-2.2zM1210.8 467.5h1.3v1.5h-1.3zM1278.0 464.6h1.3v0.9h-1.3zM1295.2 415.2h1.3v1.2h-1.3zM1237.3 497.3h2.2v1.2h-2.2zM1215.0 411.8h1.6v0.9h-1.6zM1187.9 474.2h1.3v1.5h-1.3zM1214.5 514.8h1.0v1.2h-1.0zM1137.4 445.0h2.2v1.8h-2.2zM1163.8 492.0h1.6v1.8h-1.6zM1202.0 449.4h2.2v2.4h-2.2zM1263.2 490.9h2.8v1.5h-2.8zM1230.1 451.6h1.6v1.2h-1.6zM1256.5 512.7h1.3v1.5h-1.3zM1278.3 516.9h1.0v1.2h-1.0zM1226.8 442.9h2.2v1.8h-2.2zM1180.0 514.1h1.3v1.2h-1.3zM1226.1 413.6h2.2v1.2h-2.2zM1236.7 479.5h1.3v1.8h-1.3zM1138.2 471.9h1.3v1.2h-1.3zM1267.4 472.5h1.0v1.8h-1.0zM1146.2 480.2h1.6v0.9h-1.6zM1174.0 449.4h2.8v0.9h-2.8zM1227.8 498.7h1.3v2.4h-1.3zM1296.6 445.1h1.6v0.9h-1.6zM1286.7 528.0h2.8v0.9h-2.8zM1181.3 433.6h1.3v1.5h-1.3zM1288.8 434.5h1.3v1.2h-1.3zM1197.0 527.7h1.3v0.9h-1.3z" fill="#b9b4a0" fill-opacity=".75"/>
<path d="M1213.6 453.6h1.3v0.9h-1.3zM1211.0 481.4h2.2v2.4h-2.2zM1259.0 491.4h1.3v0.9h-1.3zM1288.1 456.7h1.0v2.4h-1.0zM1247.6 461.1h2.8v1.8h-2.8zM1185.1 417.7h1.0v0.9h-1.0zM1251.5 441.3h1.0v1.5h-1.0zM1282.8 448.5h1.3v2.4h-1.3zM1162.5 504.1h2.2v1.8h-2.2zM1096.0 525.4h2.8v1.2h-2.8zM1247.6 516.2h2.8v2.4h-2.8zM1284.8 466.7h2.8v1.2h-2.8zM1209.3 444.7h2.8v2.4h-2.8zM1277.5 524.9h1.3v0.9h-1.3zM1106.9 511.8h1.6v2.4h-1.6zM1246.2 472.9h1.3v2.4h-1.3zM1288.3 417.3h2.2v1.8h-2.2zM1215.4 470.1h1.3v2.4h-1.3zM1281.4 440.2h1.6v0.9h-1.6zM1225.7 422.6h1.6v1.8h-1.6zM1147.0 475.2h2.2v1.8h-2.2zM1202.6 451.1h1.6v0.9h-1.6zM1202.2 489.3h2.2v0.9h-2.2zM1196.6 429.1h1.3v1.2h-1.3zM1115.8 481.9h1.3v1.8h-1.3zM1273.0 461.6h2.8v0.9h-2.8zM1174.9 424.0h1.0v1.8h-1.0zM1211.5 450.6h1.6v1.2h-1.6zM1222.8 413.7h1.0v1.8h-1.0zM1175.6 472.8h1.0v1.2h-1.0zM1281.4 457.0h1.0v1.8h-1.0zM1152.2 469.1h1.0v1.8h-1.0zM1221.5 428.5h2.2v1.2h-2.2zM1232.6 444.5h2.2v2.4h-2.2zM1228.6 442.5h1.3v1.8h-1.3zM1103.2 511.3h2.2v2.4h-2.2zM1221.0 409.7h1.0v0.9h-1.0zM1264.6 515.6h2.8v2.4h-2.8zM1174.2 479.2h2.8v1.8h-2.8zM1277.9 502.7h2.2v2.4h-2.2zM1100.2 510.0h1.0v1.5h-1.0zM1165.5 492.1h1.3v0.9h-1.3zM1195.6 465.4h1.3v1.8h-1.3zM1248.1 425.2h2.2v1.5h-2.2zM1174.2 408.2h2.2v1.2h-2.2zM1177.6 496.6h2.2v2.4h-2.2zM1188.5 429.6h1.0v1.5h-1.0zM1176.5 405.7h2.2v1.5h-2.2zM1237.8 470.3h2.2v0.9h-2.2zM1127.4 479.0h1.3v1.5h-1.3zM1210.6 487.2h2.2v1.5h-2.2zM1163.8 511.7h2.2v2.4h-2.2zM1242.1 419.9h1.0v0.9h-1.0zM1208.8 454.8h2.8v0.9h-2.8zM1211.4 476.3h1.0v1.8h-1.0zM1267.0 477.1h1.3v1.8h-1.3zM1270.9 504.9h2.2v1.5h-2.2zM1189.1 415.0h1.0v1.2h-1.0zM1201.9 436.4h2.8v1.5h-2.8zM1239.5 449.4h2.8v1.5h-2.8zM1100.0 527.8h2.2v2.4h-2.2zM1286.5 452.1h1.0v0.9h-1.0zM1212.3 441.1h1.3v1.5h-1.3zM1297.5 411.1h1.3v2.4h-1.3zM1266.9 469.8h1.3v1.5h-1.3zM1242.3 506.1h1.6v1.8h-1.6zM1280.7 440.4h1.0v1.8h-1.0zM1121.6 478.0h1.3v2.4h-1.3zM1225.7 490.7h2.8v2.4h-2.8zM1145.1 456.8h1.6v0.9h-1.6zM1105.6 523.9h1.6v0.9h-1.6zM1143.6 431.7h2.2v2.4h-2.2zM1286.2 424.3h1.3v1.5h-1.3zM1299.4 440.9h1.0v1.2h-1.0zM1219.6 447.5h1.0v2.4h-1.0zM1102.9 474.6h2.8v1.5h-2.8zM1301.7 468.7h2.8v1.8h-2.8zM1167.8 478.3h1.0v0.9h-1.0zM1176.8 474.2h1.3v1.8h-1.3zM1264.5 527.8h2.2v1.2h-2.2zM1215.5 487.5h1.3v1.2h-1.3zM1113.8 517.0h1.6v1.2h-1.6zM1181.3 518.1h2.2v1.2h-2.2zM1134.0 472.1h2.8v1.8h-2.8zM1185.0 527.7h2.2v2.4h-2.2zM1234.6 454.6h2.8v1.2h-2.8zM1226.4 426.5h1.3v2.4h-1.3zM1238.9 457.5h2.8v1.2h-2.8zM1227.0 491.3h1.3v1.2h-1.3zM1294.2 424.2h2.2v1.8h-2.2zM1186.5 414.7h1.6v2.4h-1.6zM1233.1 492.6h1.3v2.4h-1.3zM1206.1 491.1h2.8v2.4h-2.8zM1260.3 420.8h2.8v2.4h-2.8zM1268.3 522.5h2.8v0.9h-2.8zM1236.4 472.0h1.3v2.4h-1.3zM1186.4 508.8h1.0v0.9h-1.0zM1124.4 520.4h2.2v1.2h-2.2zM1237.8 460.1h1.3v2.4h-1.3zM1264.2 494.9h1.6v2.4h-1.6zM1288.9 443.3h1.6v2.4h-1.6zM1300.2 448.6h2.8v2.4h-2.8zM1094.5 512.9h2.2v1.8h-2.2zM1214.9 414.0h1.3v1.5h-1.3zM1176.5 521.5h1.0v1.5h-1.0zM1203.7 509.1h1.6v1.5h-1.6zM1192.8 408.0h2.8v1.8h-2.8zM1262.1 526.1h1.3v1.2h-1.3zM1219.7 496.2h1.3v1.2h-1.3zM1235.7 478.7h2.2v1.2h-2.2zM1283.8 420.7h1.6v1.2h-1.6zM1166.5 497.9h2.2v0.9h-2.2zM1258.6 490.2h1.0v1.2h-1.0zM1276.6 419.1h2.2v1.2h-2.2zM1236.8 485.6h2.8v1.5h-2.8zM1280.7 483.4h1.3v2.4h-1.3zM1268.8 511.2h1.6v2.4h-1.6zM1231.3 426.2h1.0v1.5h-1.0zM1202.4 504.2h1.6v0.9h-1.6zM1172.3 469.7h1.0v0.9h-1.0zM1192.0 515.3h2.2v1.2h-2.2zM1265.4 487.8h1.3v1.8h-1.3zM1298.3 427.3h2.8v1.5h-2.8zM1176.9 408.9h1.3v2.4h-1.3zM1230.2 410.3h1.6v1.5h-1.6zM1217.5 461.7h1.0v0.9h-1.0zM1206.1 444.5h1.3v1.2h-1.3zM1256.9 512.9h1.6v2.4h-1.6zM1155.6 422.2h1.0v1.5h-1.0zM1220.5 515.7h2.2v1.5h-2.2zM1197.1 449.5h1.0v0.9h-1.0zM1098.4 472.5h1.0v1.8h-1.0zM1290.2 428.7h1.6v1.8h-1.6zM1191.8 418.1h2.8v1.8h-2.8zM1258.1 508.9h2.2v1.8h-2.2zM1224.6 446.5h1.6v2.4h-1.6zM1095.7 511.9h2.8v1.5h-2.8zM1282.3 451.8h1.0v0.9h-1.0zM1188.4 477.2h2.2v0.9h-2.2zM1172.8 491.5h1.3v0.9h-1.3zM1203.6 481.0h1.6v0.9h-1.6zM1121.0 502.5h1.0v1.5h-1.0zM1238.2 442.0h1.0v0.9h-1.0zM1287.5 521.0h1.6v1.5h-1.6zM1209.1 465.5h2.2v0.9h-2.2zM1240.0 463.4h1.6v1.2h-1.6zM1229.0 491.5h1.0v2.4h-1.0zM1244.3 460.2h1.0v1.5h-1.0zM1155.8 486.9h2.8v0.9h-2.8zM1221.7 484.8h2.2v2.4h-2.2zM1280.8 420.4h1.0v1.2h-1.0zM1289.1 456.3h1.6v2.4h-1.6zM1222.4 441.5h1.0v1.5h-1.0zM1296.1 418.6h1.6v1.8h-1.6zM1292.9 479.5h1.6v1.8h-1.6zM1200.2 504.3h1.0v1.5h-1.0zM1191.3 516.5h1.6v1.5h-1.6zM1115.1 477.4h2.8v0.9h-2.8zM1300.2 468.4h1.3v1.8h-1.3zM1281.4 510.4h1.3v2.4h-1.3zM1225.7 459.7h1.3v1.2h-1.3zM1180.3 509.0h2.8v1.8h-2.8zM1150.9 468.8h2.8v1.2h-2.8zM1246.4 445.9h2.2v1.2h-2.2zM1212.4 431.5h1.3v2.4h-1.3zM1261.6 459.1h1.6v1.5h-1.6zM1290.9 472.9h1.0v1.2h-1.0zM1187.4 514.2h1.6v1.8h-1.6zM1171.7 435.1h1.0v1.8h-1.0zM1111.2 510.4h1.0v1.2h-1.0zM1173.1 482.1h1.3v0.9h-1.3zM1191.1 520.7h1.0v2.4h-1.0zM1122.3 476.8h2.2v2.4h-2.2zM1241.3 492.7h2.8v0.9h-2.8zM1237.9 468.4h1.6v2.4h-1.6zM1118.4 477.2h1.6v1.8h-1.6zM1204.1 452.2h1.6v1.5h-1.6zM1124.2 477.6h1.3v1.5h-1.3zM1213.1 474.1h2.2v1.8h-2.2zM1174.0 445.9h1.3v0.9h-1.3zM1111.6 485.1h1.6v0.9h-1.6zM1160.8 517.7h2.2v1.2h-2.2zM1201.9 497.5h1.3v2.4h-1.3zM1231.2 445.3h1.0v1.8h-1.0z" fill="#6f6c5c" fill-opacity=".75"/>
<path d="M1202.8 513.4h2.2v1.5h-2.2zM1283.7 459.4h2.8v2.4h-2.8zM1244.3 484.4h1.0v2.4h-1.0zM1227.4 414.6h1.0v1.2h-1.0zM1109.8 520.7h2.8v1.2h-2.8zM1213.0 449.0h2.8v2.4h-2.8zM1141.6 519.0h1.6v1.2h-1.6zM1161.1 526.5h1.0v1.5h-1.0zM1222.7 507.1h1.3v1.2h-1.3zM1294.5 464.0h2.8v1.5h-2.8zM1253.8 479.3h2.2v1.5h-2.2zM1246.3 458.4h1.3v0.9h-1.3zM1225.2 461.9h1.3v1.5h-1.3zM1227.1 460.7h1.6v1.5h-1.6zM1120.0 501.1h1.3v1.8h-1.3zM1251.2 422.1h1.3v1.8h-1.3zM1115.2 483.1h1.3v1.5h-1.3zM1222.8 518.7h2.8v1.5h-2.8zM1173.8 472.6h2.8v1.5h-2.8zM1166.7 448.1h2.8v1.8h-2.8zM1279.7 455.5h1.0v2.4h-1.0zM1192.5 429.6h1.3v1.5h-1.3zM1116.4 499.5h1.0v2.4h-1.0zM1222.6 505.4h1.0v1.5h-1.0zM1140.4 435.1h2.8v0.9h-2.8zM1166.3 492.7h2.2v1.2h-2.2zM1175.2 469.8h1.6v0.9h-1.6zM1235.2 449.9h2.8v1.2h-2.8zM1193.3 466.2h1.0v2.4h-1.0zM1254.2 479.6h2.8v1.5h-2.8zM1204.6 412.9h1.6v1.5h-1.6zM1273.1 527.7h2.2v1.8h-2.2zM1209.2 506.7h2.8v2.4h-2.8zM1228.9 429.9h2.2v0.9h-2.2zM1270.6 457.8h1.0v1.2h-1.0zM1293.8 415.5h1.3v1.5h-1.3zM1230.1 496.6h1.3v0.9h-1.3zM1271.7 504.4h1.6v1.5h-1.6zM1194.2 412.2h2.2v1.2h-2.2zM1280.6 475.3h1.3v1.5h-1.3zM1168.2 486.9h1.3v1.2h-1.3zM1258.9 460.5h2.2v1.2h-2.2zM1205.6 433.0h1.3v1.2h-1.3zM1229.0 439.7h1.3v0.9h-1.3zM1255.4 416.9h1.6v0.9h-1.6zM1197.7 469.9h1.6v1.8h-1.6zM1299.6 471.6h1.3v1.5h-1.3z" fill="#a89350" fill-opacity=".75"/>
<path d="M1212.4 427.5h1.0v2.4h-1.0zM1170.2 474.8h2.8v2.4h-2.8zM1291.8 470.0h1.3v2.4h-1.3zM1198.1 483.6h1.3v1.2h-1.3zM1151.4 436.4h1.6v1.8h-1.6zM1223.4 516.5h1.0v1.8h-1.0zM1164.9 484.4h1.0v1.8h-1.0zM1249.8 463.8h1.3v1.8h-1.3zM1124.6 517.1h1.3v2.4h-1.3zM1260.0 425.5h2.2v2.4h-2.2zM1150.9 500.5h2.8v0.9h-2.8zM1199.2 504.9h1.3v2.4h-1.3zM1289.9 436.4h2.8v1.2h-2.8zM1225.6 504.2h1.0v2.4h-1.0zM1284.3 481.7h1.0v2.4h-1.0zM1147.7 426.6h1.6v2.4h-1.6zM1276.9 457.8h1.0v0.9h-1.0zM1172.6 467.2h2.8v1.2h-2.8zM1246.4 505.5h1.3v2.4h-1.3zM1211.8 505.6h1.0v2.4h-1.0zM1144.1 437.0h1.0v2.4h-1.0zM1251.1 432.8h2.2v1.8h-2.2zM1193.8 464.7h1.0v1.2h-1.0zM1202.5 523.1h1.3v2.4h-1.3zM1199.3 514.9h1.3v1.8h-1.3zM1249.9 508.9h1.0v1.2h-1.0zM1301.7 477.6h1.6v1.8h-1.6zM1155.2 496.4h1.6v1.8h-1.6zM1136.4 517.2h1.3v1.8h-1.3zM1203.0 472.4h1.0v1.8h-1.0zM1197.1 488.3h1.6v1.2h-1.6zM1286.4 432.3h1.0v1.5h-1.0zM1093.8 498.5h1.0v0.9h-1.0zM1115.4 493.4h2.2v1.5h-2.2zM1264.2 509.1h1.6v0.9h-1.6zM1146.3 478.9h1.3v0.9h-1.3zM1211.4 448.6h2.2v0.9h-2.2zM1301.3 449.5h1.3v1.8h-1.3zM1193.9 410.7h2.2v0.9h-2.2zM1168.1 422.7h1.3v0.9h-1.3zM1093.7 527.3h2.2v2.4h-2.2zM1243.6 414.0h2.8v1.8h-2.8zM1256.9 407.2h1.0v2.4h-1.0zM1161.5 451.1h1.6v0.9h-1.6zM1215.4 487.0h1.6v0.9h-1.6zM1266.2 423.8h1.0v1.2h-1.0zM1147.6 447.9h1.0v1.5h-1.0zM1197.1 417.7h1.0v1.8h-1.0zM1287.1 515.5h1.0v1.8h-1.0zM1228.3 509.7h2.8v1.2h-2.8zM1256.5 493.1h1.3v1.5h-1.3zM1193.9 406.5h2.8v1.2h-2.8zM1291.8 429.0h1.6v0.9h-1.6zM1243.6 505.8h1.3v1.5h-1.3zM1251.8 485.2h2.2v1.5h-2.2zM1211.0 444.6h1.3v2.4h-1.3zM1282.0 503.0h1.3v2.4h-1.3zM1228.1 406.6h1.0v1.5h-1.0zM1264.8 463.4h1.0v2.4h-1.0zM1232.4 461.2h1.3v0.9h-1.3zM1275.2 421.3h1.6v2.4h-1.6zM1235.1 478.2h1.3v1.8h-1.3zM1207.7 414.4h2.2v1.2h-2.2zM1209.5 466.3h1.6v0.9h-1.6zM1260.6 463.6h2.2v1.5h-2.2zM1240.0 507.4h1.6v2.4h-1.6zM1125.9 519.1h1.0v1.5h-1.0zM1205.9 464.6h2.2v1.2h-2.2zM1175.7 492.5h2.8v0.9h-2.8zM1111.8 519.1h1.3v1.8h-1.3zM1289.7 411.4h2.8v0.9h-2.8zM1246.8 426.5h2.2v2.4h-2.2zM1286.3 416.2h1.6v1.8h-1.6zM1241.7 428.6h1.0v0.9h-1.0zM1201.6 509.1h1.0v2.4h-1.0zM1218.3 476.1h2.8v1.2h-2.8zM1163.0 458.4h1.6v1.8h-1.6zM1262.1 514.5h1.0v0.9h-1.0zM1272.0 519.3h2.2v1.5h-2.2zM1197.1 524.3h2.2v1.5h-2.2zM1093.6 492.8h1.6v1.8h-1.6zM1202.2 506.9h2.8v1.8h-2.8zM1119.2 497.8h1.0v2.4h-1.0zM1279.3 412.5h1.6v2.4h-1.6zM1169.6 503.9h2.2v0.9h-2.2zM1239.1 435.1h2.2v1.5h-2.2zM1284.1 497.7h1.0v1.8h-1.0zM1290.8 457.0h1.6v2.4h-1.6zM1236.4 464.8h2.2v1.2h-2.2zM1131.8 483.8h1.3v0.9h-1.3zM1292.1 464.1h1.3v1.5h-1.3zM1203.9 483.2h1.3v1.2h-1.3zM1245.2 448.3h1.6v1.5h-1.6zM1219.2 416.5h2.8v1.5h-2.8zM1122.1 491.3h1.0v1.2h-1.0zM1225.3 483.3h1.6v1.5h-1.6zM1294.3 446.7h1.6v2.4h-1.6zM1242.6 445.8h1.6v1.5h-1.6zM1299.4 448.6h2.2v0.9h-2.2zM1161.3 497.7h2.2v2.4h-2.2zM1205.6 477.6h2.8v1.2h-2.8zM1218.7 445.4h2.8v1.5h-2.8zM1258.3 463.7h1.6v1.2h-1.6zM1256.0 511.9h1.3v1.8h-1.3zM1180.6 525.6h2.2v1.8h-2.2zM1265.5 486.9h1.0v2.4h-1.0zM1282.9 410.2h2.8v1.5h-2.8zM1207.2 451.5h2.2v1.5h-2.2zM1216.4 442.3h2.8v1.5h-2.8zM1146.4 437.2h2.8v1.8h-2.8zM1258.6 481.2h1.6v0.9h-1.6zM1250.4 525.2h2.2v2.4h-2.2zM1286.5 440.7h1.6v1.8h-1.6zM1111.4 498.2h1.0v1.2h-1.0zM1231.8 441.3h2.2v2.4h-2.2zM1235.3 442.4h1.3v1.8h-1.3zM1205.2 450.7h2.2v1.8h-2.2zM1272.3 419.6h1.3v0.9h-1.3zM1243.6 497.6h1.3v2.4h-1.3zM1256.9 522.9h2.2v1.2h-2.2zM1209.9 416.0h2.8v0.9h-2.8zM1239.6 430.4h1.3v0.9h-1.3zM1201.3 440.5h1.0v0.9h-1.0zM1138.5 434.4h2.8v0.9h-2.8zM1287.7 502.3h1.0v0.9h-1.0zM1286.3 489.8h1.0v0.9h-1.0zM1134.6 482.1h2.2v0.9h-2.2zM1266.1 521.1h1.0v1.8h-1.0zM1260.7 477.8h2.2v1.8h-2.2zM1215.8 474.2h2.2v2.4h-2.2zM1236.2 492.8h2.2v1.8h-2.2zM1111.2 485.6h1.6v2.4h-1.6zM1300.4 427.4h2.2v1.8h-2.2zM1261.7 419.1h1.0v1.8h-1.0zM1293.2 449.3h1.3v1.5h-1.3zM1292.8 467.3h2.8v1.2h-2.8zM1295.4 452.9h1.0v0.9h-1.0zM1241.2 489.8h2.8v0.9h-2.8zM1216.2 526.8h1.3v1.5h-1.3zM1213.2 507.2h2.8v1.5h-2.8zM1235.4 449.2h1.6v1.8h-1.6zM1289.4 437.2h1.3v0.9h-1.3zM1248.2 418.7h2.2v1.8h-2.2zM1163.4 512.1h1.3v2.4h-1.3zM1286.2 412.3h1.0v2.4h-1.0zM1213.8 454.5h2.8v1.5h-2.8zM1240.2 492.0h2.8v1.5h-2.8zM1186.2 473.4h1.0v2.4h-1.0zM1262.0 471.1h1.0v1.2h-1.0zM1221.7 418.0h1.3v1.5h-1.3zM1277.8 464.8h1.0v1.5h-1.0zM1097.4 517.6h2.8v1.8h-2.8zM1116.2 495.0h1.0v0.9h-1.0zM1296.4 414.8h1.0v1.2h-1.0zM1243.3 511.7h1.3v1.8h-1.3zM1293.0 451.7h1.0v0.9h-1.0zM1217.3 503.9h1.0v0.9h-1.0zM1221.6 461.1h1.0v2.4h-1.0zM1286.1 475.8h1.3v0.9h-1.3zM1250.4 497.8h1.6v1.5h-1.6zM1206.7 448.6h1.6v0.9h-1.6zM1231.7 434.6h2.2v2.4h-2.2zM1282.5 405.7h1.6v1.8h-1.6zM1299.8 426.0h2.2v2.4h-2.2zM1269.7 413.1h1.0v1.2h-1.0zM1247.1 450.3h1.3v2.4h-1.3zM1275.3 517.7h1.3v1.5h-1.3zM1287.8 407.8h1.3v1.2h-1.3zM1286.1 461.6h1.3v0.9h-1.3zM1224.2 505.4h1.0v1.8h-1.0zM1261.0 522.2h1.0v1.5h-1.0zM1241.2 475.1h1.3v1.2h-1.3zM1128.0 477.2h2.2v1.5h-2.2zM1264.8 491.6h1.0v2.4h-1.0zM1178.5 524.2h1.3v1.5h-1.3zM1276.7 418.1h2.8v1.2h-2.8zM1251.5 443.3h2.2v0.9h-2.2zM1244.7 438.1h1.0v0.9h-1.0zM1197.9 421.6h2.8v0.9h-2.8zM1288.1 431.0h2.2v1.2h-2.2zM1260.9 468.2h2.2v1.5h-2.2zM1267.1 425.1h1.3v1.8h-1.3zM1249.5 518.4h2.2v0.9h-2.2zM1175.4 439.5h1.0v1.8h-1.0zM1283.6 506.1h1.0v1.2h-1.0zM1242.1 487.9h1.0v1.5h-1.0zM1254.8 511.1h2.8v0.9h-2.8zM1269.1 526.4h1.6v1.8h-1.6zM1221.5 466.2h1.0v1.2h-1.0zM1200.7 497.1h1.0v1.2h-1.0zM1210.3 503.4h1.3v0.9h-1.3zM1224.4 410.8h1.0v1.5h-1.0zM1282.0 429.2h2.8v0.9h-2.8zM1104.0 522.0h1.0v0.9h-1.0zM1231.5 495.9h1.3v1.5h-1.3zM1247.1 411.4h2.8v2.4h-2.8zM1228.0 466.5h2.8v0.9h-2.8zM1193.2 476.5h1.3v1.5h-1.3zM1231.8 480.8h1.0v2.4h-1.0zM1184.0 514.3h1.0v1.8h-1.0zM1243.9 430.8h1.6v1.5h-1.6zM1159.4 489.4h1.0v0.9h-1.0zM1208.8 454.6h1.3v1.2h-1.3zM1200.6 486.8h1.3v0.9h-1.3zM1296.8 414.9h1.6v1.5h-1.6zM1238.8 412.4h2.2v0.9h-2.2zM1279.5 468.3h2.2v1.5h-2.2z" fill="#55574f" fill-opacity=".75"/>
<path d="M1238.7 412.1h1.6v2.4h-1.6zM1175.4 464.2h1.3v0.9h-1.3zM1218.9 463.3h1.0v1.8h-1.0zM1194.8 527.7h1.3v1.8h-1.3zM1260.1 426.9h1.0v1.5h-1.0zM1278.7 525.3h1.6v1.2h-1.6zM1164.6 508.0h1.3v1.8h-1.3zM1153.8 468.6h2.2v0.9h-2.2zM1149.6 435.1h2.2v1.8h-2.2zM1175.2 516.3h1.0v0.9h-1.0zM1151.5 447.9h1.0v2.4h-1.0zM1144.4 469.8h1.0v1.8h-1.0zM1148.0 516.7h2.2v1.2h-2.2zM1240.0 509.5h1.3v1.2h-1.3zM1292.8 436.3h1.0v1.2h-1.0zM1266.6 503.4h2.2v1.8h-2.2zM1225.3 405.9h1.0v1.2h-1.0zM1224.0 457.4h1.0v0.9h-1.0zM1169.8 475.9h1.3v1.2h-1.3zM1211.5 440.5h1.0v2.4h-1.0zM1103.7 473.7h2.2v1.8h-2.2zM1283.2 412.0h2.8v1.8h-2.8zM1170.5 433.4h1.3v0.9h-1.3zM1242.9 428.4h1.0v1.2h-1.0zM1139.1 520.7h1.3v1.8h-1.3zM1208.6 437.3h2.8v2.4h-2.8zM1204.6 452.2h2.2v0.9h-2.2zM1201.8 519.7h2.8v1.5h-2.8zM1181.7 521.7h1.3v2.4h-1.3zM1115.4 504.3h2.2v0.9h-2.2zM1160.7 461.6h1.3v1.8h-1.3zM1264.0 488.9h2.2v1.8h-2.2zM1157.5 494.8h1.6v0.9h-1.6zM1179.6 409.7h1.6v1.8h-1.6zM1182.0 438.8h2.2v1.2h-2.2zM1227.2 487.2h2.2v1.5h-2.2zM1206.0 483.2h2.8v2.4h-2.8zM1203.8 508.9h1.0v1.5h-1.0zM1166.6 452.2h2.8v1.2h-2.8zM1146.8 517.2h1.3v0.9h-1.3zM1149.7 515.6h1.3v2.4h-1.3zM1099.8 478.8h1.6v1.2h-1.6zM1291.4 439.4h2.8v1.2h-2.8zM1211.1 486.1h1.6v0.9h-1.6zM1246.5 498.1h2.2v1.2h-2.2zM1281.9 442.7h1.6v2.4h-1.6zM1174.6 523.3h1.0v1.5h-1.0zM1250.9 508.7h1.6v0.9h-1.6zM1253.4 430.7h2.2v1.8h-2.2zM1209.5 494.3h2.8v1.5h-2.8zM1197.4 470.3h1.6v2.4h-1.6zM1252.0 523.5h1.3v1.8h-1.3zM1208.0 429.5h1.3v2.4h-1.3zM1154.0 497.4h1.6v0.9h-1.6zM1301.5 432.5h1.6v1.5h-1.6zM1216.5 458.0h1.3v1.8h-1.3zM1241.8 492.8h1.6v1.8h-1.6zM1112.5 513.1h2.8v1.2h-2.8zM1220.7 423.8h2.8v1.8h-2.8zM1245.4 446.9h2.8v1.2h-2.8zM1229.4 464.1h2.8v1.2h-2.8zM1152.4 482.7h1.6v1.8h-1.6z" fill="#d3cfc0" fill-opacity=".75"/>
<rect x="1152.9" y="423.8" width="15.6" height="21.5" fill="#1e2124" stroke="#0c0d0c" stroke-width=".6"/>
<rect x="1176.8" y="440.5" width="18.0" height="21.5" fill="#1c1e20" stroke="#0b0b0b" stroke-width=".6"/>
<path d="M1182 446 l8 10 M1190 446 l-8 10" stroke="#3c3f42" stroke-width=".8"/>
<rect x="1127.1" y="489.9" width="21.5" height="25.3" fill="#1d2125" stroke="#0b0c0c" stroke-width=".6"/>
<rect x="1154.3" y="473.6" width="12.4" height="7.7" fill="#1b1d1d"/>
<rect x="1157" y="475.4" width="7.4" height="3.8" fill="#30352f"/>
<rect x="1180.1" y="481.8" width="13.4" height="25.3" fill="#191b1d" stroke="#0b0b0b" stroke-width=".5"/>
<rect x="1254.8" y="428.7" width="23.4" height="27.2" fill="#2c3239" stroke="#0e0f10" stroke-width=".7"/>
<rect x="1250.9" y="466.5" width="8.1" height="11.5" fill="#1f2327"/>
<rect x="1269.2" y="487.2" width="10.4" height="12.2" fill="#22262a"/>
<rect x="1241.8" y="491.8" width="6.2" height="7.7" fill="#1a1c1c"/>
<rect x="1241.4" y="506.6" width="6.2" height="7.7" fill="#1c1f1c"/>
<rect x="1225.1" y="515.2" width="11.5" height="13.4" fill="#20261d"/>
<rect x="1237" y="516.2" width="8.7" height="12.4" fill="#1e231c"/>
<path d="M1226.4 516.6 v2.8 M1228.4 516.6 v2.8 M1230.4 516.6 v2.8 M1232.4 516.6 v2.8" stroke="#d8d8d0" stroke-width=".9"/>
<rect x="1210.3" y="427.7" width="9.1" height="8.6" fill="#33425c"/>
<rect x="1198.6" y="424" width="3.0" height="11.5" fill="#3a4a60"/>
<rect x="1208.4" y="438" width="7.2" height="9.8" fill="#8f8f89"/>
<rect x="1216.8" y="438" width="7.4" height="9.8" fill="#8f8f89"/>
<rect x="1237.8" y="425.3" width="7.1" height="6.7" fill="#7d7d75"/>
<rect x="1246" y="422" width="6.0" height="7.0" fill="#6f6a57"/>
<rect x="1239" y="433.3" width="6.7" height="5.9" fill="#6b5b3b"/>
<rect x="1239" y="440" width="6.7" height="6.8" fill="#7c7c72"/>
<rect x="1239" y="448.3" width="6.7" height="6.7" fill="#6b5b3b"/>
<rect x="1247.5" y="436" width="4.0" height="4.4" fill="#54574f"/>
<rect x="1247.5" y="442" width="4.0" height="4.0" fill="#54574f"/>
<rect x="1247.5" y="448" width="4.0" height="4.0" fill="#54574f"/>
<rect x="1234.2" y="433" width="3.3" height="7.0" fill="#c9c4a8"/>
<rect x="1234.2" y="434.96" width="3.3" height="3.1" fill="#b39a3a"/>
<rect x="1234.2" y="442" width="3.3" height="7.0" fill="#c9c4a8"/>
<rect x="1234.2" y="443.96" width="3.3" height="3.1" fill="#b39a3a"/>
<rect x="1222.2" y="462.6" width="3.4" height="6.7" fill="#c9c4a8"/>
<rect x="1222.2" y="464.476" width="3.4" height="2.9" fill="#b39a3a"/>
<rect x="1223.7" y="477.5" width="3.8" height="6.2" fill="#c9c4a8"/>
<rect x="1223.7" y="479.236" width="3.8" height="2.7" fill="#b39a3a"/>
<rect x="1232.8" y="482.7" width="4.2" height="3.3" fill="#c9c4a8"/>
<rect x="1233.9759999999999" y="482.7" width="1.8" height="3.3" fill="#b39a3a"/>
<rect x="1249.5" y="485.6" width="2.9" height="5.7" fill="#c9c4a8"/>
<rect x="1249.5" y="487.196" width="2.9" height="2.5" fill="#b39a3a"/>
<rect x="1260" y="487.5" width="3.4" height="6.7" fill="#c9c4a8"/>
<rect x="1260" y="489.376" width="3.4" height="2.9" fill="#b39a3a"/>
<rect x="1237" y="504.2" width="3.0" height="6.2" fill="#c9c4a8"/>
<rect x="1237" y="505.936" width="3.0" height="2.7" fill="#b39a3a"/>
<rect x="1265.3" y="468.4" width="3.8" height="6.2" fill="#c9c4a8"/>
<rect x="1265.3" y="470.13599999999997" width="3.8" height="2.7" fill="#b39a3a"/>
<rect x="1270" y="468.4" width="3.4" height="6.2" fill="#c9c4a8"/>
<rect x="1270" y="470.13599999999997" width="3.4" height="2.7" fill="#b39a3a"/>
<rect x="1231" y="463" width="7.0" height="3.4" fill="#c9c4a8"/>
<rect x="1232.96" y="463" width="3.1" height="3.4" fill="#b39a3a"/>
<rect x="1207.5" y="449.5" width="6.5" height="3.5" fill="#c9c4a8"/>
<rect x="1209.32" y="449.5" width="2.9" height="3.5" fill="#b39a3a"/>
<rect x="1217.5" y="449.5" width="6.0" height="3.5" fill="#c9c4a8"/>
<rect x="1219.18" y="449.5" width="2.6" height="3.5" fill="#b39a3a"/>
<rect x="1217.5" y="454.6" width="6.0" height="3.4" fill="#c9c4a8"/>
<rect x="1219.18" y="454.6" width="2.6" height="3.4" fill="#b39a3a"/>
<rect x="1231" y="451" width="6.0" height="3.4" fill="#c9c4a8"/>
<rect x="1232.68" y="451" width="2.6" height="3.4" fill="#b39a3a"/>
<rect x="1240.5" y="418.6" width="5.1" height="3.8" fill="#c9c4a8"/>
<rect x="1241.9279999999999" y="418.6" width="2.2" height="3.8" fill="#b39a3a"/>
<rect x="1252.6" y="419.4" width="2.2" height="4.2" fill="#a89858"/>
<rect x="1255.6" y="419.4" width="2.2" height="4.2" fill="#a89858"/>
<rect x="1261.4" y="419.4" width="2.2" height="4.2" fill="#a89858"/>
<rect x="1264.4" y="419.4" width="2.2" height="4.2" fill="#a89858"/>
<rect x="1267.4" y="419.4" width="2.2" height="4.2" fill="#a89858"/>
<rect x="1271.6" y="419.4" width="2.2" height="4.2" fill="#a89858"/>
<rect x="1274.6" y="419.4" width="2.2" height="4.2" fill="#a89858"/>
<rect x="1277.4" y="419.4" width="2.2" height="4.2" fill="#a89858"/>
<rect x="1162.2" y="496.1" width="5.8" height="7.2" fill="#c9c1a9"/>
<rect x="1154.8" y="507.1" width="5.7" height="4.8" fill="#a9a9a1"/>
<rect x="1124" y="480.6" width="3.4" height="3.4" fill="#b3ac98"/>
<rect x="1131.3" y="476.4" width="2.9" height="4.2" fill="#5a6c8c"/>
<rect x="1120.4" y="487.4" width="3.6" height="4.0" fill="#3f5476"/>
<rect x="1185.2" y="468.2" width="2.4" height="5.4" fill="#c9bfae"/>
<rect x="1189.4" y="466.6" width="4.0" height="5.2" fill="#b89a3c"/>
<rect x="1282.5" y="434.9" width="3.8" height="8.1" fill="#a1a199"/>
<rect x="1275.3" y="474.1" width="8.6" height="8.1" fill="#8a8878"/>
<rect x="1260" y="402.4" width="17.2" height="10.5" fill="#9b998a"/>
<rect x="1245.9" y="386.4" width="12.2" height="9.8" fill="#8f8c7a"/>
<rect x="1248.4" y="389.4" width="7.4" height="3.6" fill="#3a3a34"/>
<rect x="1228" y="384.2" width="14.0" height="10.8" fill="#c8a43c"/>
<rect x="1278.4" y="408.6" width="8.8" height="3.8" fill="#6a6448"/>
<rect x="1229.6" y="407.8" width="7.8" height="4.4" fill="#7a6a48"/>
<rect x="1178.4" y="386" width="3.6" height="8.4" fill="#6a6a3a"/>
<rect x="1183" y="386.4" width="2.6" height="6.6" fill="#8a8a86"/>
<rect x="1267" y="389.4" width="2.8" height="9.0" fill="#5a5a46"/>
<rect x="1275" y="389" width="3.6" height="8.0" fill="#9a9a94"/>
<rect x="1137.4" y="387.4" width="3.0" height="8.6" fill="#6a6a34"/>
<rect x="1137.4" y="406.6" width="3.0" height="8.8" fill="#6a6a34"/>
<rect x="1197.2" y="409.6" width="2.8" height="9.0" fill="#5a5a40"/>
<rect x="1099.6" y="424.4" width="3.0" height="9.0" fill="#5a5a38"/>
<circle cx="1211.7" cy="388" r="5" fill="#0c0d0b"/>
<path d="M1209 388.6 a2.7 2.7 0 0 1 5.4 0 M1210.4 388.2 v3.2 M1213 388.2 v3.2" stroke="#b8b8a8" stroke-width=".9"/>
<rect x="1107.6" y="426.2" width="18" height="20.3" stroke="#8a6a2a" stroke-width=".9"/>
<path d="M1110 437 v7.4 h13.4 v-7.4" stroke="#8a6a2a" stroke-width=".8"/>
<rect x="1113.4" y="432.2" width="6.2" height="8.2" fill="#f4f4ee"/>
<rect x="1114" y="434.2" width="5.0" height="5.6" fill="#e3d46a"/>
<path d="M1110 453 h13.6" stroke="#8a6a2a" stroke-width="1.4"/>
<rect x="1130.4" y="435.4" width="5.2" height="2.6" fill="#e8e8e4"/>
<rect x="1131.8" y="442" width="4.8" height="4.2" fill="#b8962e"/>
<rect x="1139.2" y="439.8" width="3.8" height="3.6" fill="#5c7fc0"/>
<rect x="1141" y="425.8" width="5.4" height="7.8" fill="#1f2324"/>
<rect x="1096.2" y="482.4" width="10.6" height="21.2" stroke="#8c8c8a" stroke-width=".9"/>
<rect x="1097.9" y="486.5" width="6.7" height="9.6" fill="#b1a991"/>
<rect x="1093.4" y="505.4" width="5.4" height="2.6" rx="1.2" stroke="#9a9a90" stroke-width=".7"/>
<rect x="1100.2" y="508" width="5.0" height="1.6" fill="#d8d8d2"/>
<rect x="1126.4" y="460" width="5.0" height="1.8" fill="#d8d8d2"/>
<path d="M1091.4 484 Q1093 470 1104.5 465.5 M1095 480 Q1098 472 1105 469.5 M1101 469 L1122 463.8 M1113.5 470.2 L1123 467.4" stroke="#8a6e2c" stroke-width=".7" stroke-dasharray="1.6 .6"/>
<path d="M1138.6 447.6 H1170 Q1172 447.6 1172 445.6 V421.8 Q1172 419.8 1170 419.8 H1141 Q1138.9 419.8 1138.9 422 V429 Q1138.9 432 1136 432 H1131 M1129 436.5 Q1128.4 437 1128.4 438.4 V445.6 Q1128.4 447.6 1130.4 447.6 H1147" stroke="#b9b9b1" stroke-width="1.15" stroke-linejoin="round" stroke-linecap="round"/>
<path d="M1174.9 455 V460 Q1174.9 464.1 1170.6 464.1 H1138.6 Q1134.9 464.1 1134.9 467.6 V469.6 Q1134.9 472.4 1132 472.4 H1111.8 Q1108.9 472.4 1108.9 475.4 V516.2 Q1108.9 519 1111.8 519 H1132 Q1135.2 519 1135.2 522 V528.6 Q1135.2 531.5 1138.2 531.5 H1167.6 Q1170.6 531.5 1170.6 528.6 V515.2 Q1170.6 511.9 1174 511.9 H1202.2" stroke="#b9b9b1" stroke-width="1.15" stroke-linejoin="round" stroke-linecap="round"/>
<path d="M1173.4 472.7 V508.5" stroke="#b9b9b1" stroke-width="1.15" stroke-linejoin="round" stroke-linecap="round"/>
<path d="M1174.9 455 V444 Q1174.9 440.4 1176 440.2" stroke="#b9b9b1" stroke-width="1.15" stroke-linejoin="round" stroke-linecap="round" stroke-opacity=".5"/>
<path d="M1204.6 510 V428.8 Q1204.6 425.6 1207.8 425.2 L1214 423.6 Q1216.4 422.8 1217.6 421 L1222.6 414 Q1224 412 1226.4 412 H1241 Q1242.8 412 1244 413.4 L1245.4 414.8 Q1246.4 415.8 1248 415.8 H1285 Q1288.2 415.8 1288.2 419 V443" stroke="#b9b9b1" stroke-width="1.15" stroke-linejoin="round" stroke-linecap="round"/>
<path d="M1202.2 455 V510.4 Q1202.2 512.4 1200.2 512.4" stroke="#b9b9b1" stroke-width="1.15" stroke-linejoin="round" stroke-linecap="round" stroke-opacity=".8"/>
<path d="M1207.4 512.4 H1220.8" stroke="#b9b9b1" stroke-width="1.15" stroke-linejoin="round" stroke-linecap="round"/>
<path d="M1261 510 H1280 Q1281.4 510 1282.4 509 L1287.2 504.8 Q1288.2 503.8 1288.2 502.4 V482.8" stroke="#b9b9b1" stroke-width="1.15" stroke-linejoin="round" stroke-linecap="round" stroke-opacity=".85"/>
<path d="M1288.2 449 V470" stroke="#b9b9b1" stroke-width="1.15" stroke-linejoin="round" stroke-linecap="round" stroke-opacity=".7"/>
<path d="M1137 531.9 H1168 M1222 531.6 H1252" stroke="#b9b9b1" stroke-width="1.15" stroke-linejoin="round" stroke-linecap="round" stroke-opacity=".6"/>
<rect x="1190" y="515.8" width="23.8" height="8.4" fill="#5a5248"/>
<rect x="1192" y="517.6" width="20.0" height="1.6" fill="#2a2622"/>
<rect x="1192" y="521" width="20.0" height="1.6" fill="#2a2622"/>
<rect x="1253.6" y="517.4" width="19.6" height="11" rx="1.5" fill="#27344e" stroke="#69758c" stroke-width="1.1"/>
<rect x="1256.4" y="521.4" width="14.0" height="3.6" fill="#3c4e74"/>
<path d="M1257.6 518.4v2.4M1260.4 518.4v2.4M1263.2 518.4v2.4M1266 518.4v2.4M1268.8 518.4v2.4" stroke="#a88a3a" stroke-width=".9"/>
<rect x="1293" y="427.7" width="8.0" height="34.3" fill="#3a3128"/>
<path d="M1293.8 429 V461 M1300.2 429 V461" stroke="#9a7c34" stroke-width="1.1" stroke-dasharray=".9 .9"/>
<rect x="1296" y="428.4" width="2.0" height="33.0" fill="#16140f"/>
<rect x="1293.6" y="456" width="7.0" height="7.0" fill="#2c3038"/>
<path d="M1278.4 522.4 Q1278.4 518.2 1282.6 518.2 H1289 V520 Q1284.4 521 1284.4 525 Q1284.4 528.6 1287.6 529 V532.4 H1281 Q1278.8 530 1278.4 526 Z" fill="#8b8b7d"/>
<rect x="1149.2" y="520.8" width="7.8" height="7.2" rx="1" fill="#1a1e18" stroke="#33472a" stroke-width=".9"/>
<circle cx="1215.1" cy="414.1" r="5.4" fill="#d1aa45"/><circle cx="1215.1" cy="414.1" r="2.8" fill="#fff"/>
<circle cx="1128" cy="526.4" r="5" fill="#d1aa45"/><circle cx="1128" cy="526.4" r="2.5" fill="#fff"/>
<circle cx="1180.2" cy="525.4" r="6" fill="#d1aa45"/><circle cx="1180.2" cy="525.4" r="3" fill="#fff"/>
<circle cx="1294" cy="477" r="5.3" fill="#d1aa45"/><circle cx="1294" cy="477" r="2.7" fill="#fff"/>
<circle cx="1301.1" cy="477.2" r="2.3" fill="#fff"/>
<circle cx="1297.8" cy="407.2" r="2.2" fill="#fff"/>
<circle cx="1098.9" cy="528.6" r="2" fill="#fff"/>
<path d="M1306 408.6 A6 6 0 1 0 1306 419.6" stroke="#d1aa45" stroke-width="3.4"/>
<path d="M1090.6 432.4 A6 6 0 0 1 1090.6 444" stroke="#c9a240" stroke-width="3"/>
<path d="M1296.5 418 l2.5 2.5 l-2.5 2.5 l-2.5 -2.5z M1095.3 519.9 l2.5 2.5 l-2.5 2.5 l-2.5 -2.5z" fill="#d1aa45"/>
<g fill="#d1aa45"><circle cx="1174.4" cy="518.1" r="1.5"/><circle cx="1179.2" cy="516.2" r="1.3"/><circle cx="1184.4" cy="517.1" r="1.7"/><circle cx="1197.8" cy="529.6" r="1.6"/><circle cx="1258.6" cy="514.8" r="1.7"/><circle cx="1269.6" cy="514.8" r="1.7"/><circle cx="1278.7" cy="514.8" r="1.7"/><circle cx="1286.4" cy="514.8" r="1.6"/><circle cx="1197.4" cy="529.6" r="1.7"/><circle cx="1203.4" cy="529.6" r="1.7"/><circle cx="1209.8" cy="529.6" r="1.7"/><circle cx="1225.6" cy="512.8" r="1.2"/><circle cx="1233.2" cy="496.6" r="1.2"/></g>
<circle cx="1093" cy="423.8" r="3.2" fill="#2a2c28" stroke="#9c8240" stroke-width="1.2"/><circle cx="1093" cy="423.8" r="1.1" fill="#8a94a0"/>
<circle cx="1132.6" cy="425" r="3" fill="#2a2c28" stroke="#9c8240" stroke-width="1.2"/><circle cx="1132.6" cy="425" r="1.0" fill="#8a94a0"/>
<circle cx="1098.9" cy="462.2" r="3.4" fill="#2a2c28" stroke="#9c8240" stroke-width="1.2"/><circle cx="1098.9" cy="462.2" r="1.2" fill="#8a94a0"/>
<circle cx="1128.5" cy="464.6" r="2.4" fill="#2a2c28" stroke="#9c8240" stroke-width="1.2"/><circle cx="1128.5" cy="464.6" r="0.8" fill="#8a94a0"/>
<circle cx="1162.4" cy="457.4" r="2.9" fill="#2a2c28" stroke="#9c8240" stroke-width="1.2"/><circle cx="1162.4" cy="457.4" r="1.0" fill="#8a94a0"/>
<circle cx="1102.7" cy="512.8" r="2.3" fill="#2a2c28" stroke="#9c8240" stroke-width="1.2"/><circle cx="1102.7" cy="512.8" r="0.8" fill="#8a94a0"/>
<circle cx="1116.5" cy="526.2" r="3" fill="#2a2c28" stroke="#9c8240" stroke-width="1.2"/><circle cx="1116.5" cy="526.2" r="1.0" fill="#8a94a0"/>
<rect x="1268.1" y="486.1" width="12.5" height="14.3" stroke="#d8232f" stroke-width="1.4"/>
<path d="M1274.4 500.4 V538" stroke="#d8232f" stroke-width="1.3"/>
<rect x="1261.7" y="537.7" width="25.5" height="29.4" fill="#fff" stroke="#d8232f" stroke-width="1.3"/>
<circle cx="1268.2" cy="560" r="2.5" fill="#e0101e"/>
</svg>
<div id="status" class="abs"><span class="t" id="sttext" style="left:585.6px;top:3.7px;font-family:'Liberation Mono',monospace;font-size:13.2px;color:#fff;letter-spacing:0;transform-origin:0 50%;transform:scaleX(1.1364);-webkit-text-stroke:0.2px #fff">XZZ Schematics https://www.xzztools.com</span></div>
<div class="abs" style="left:0;top:0;width:1px;height:1px;background:#000"></div><div class="abs" style="left:1522px;top:0;width:1px;height:1px;background:#000"></div>

</body>
</html>
